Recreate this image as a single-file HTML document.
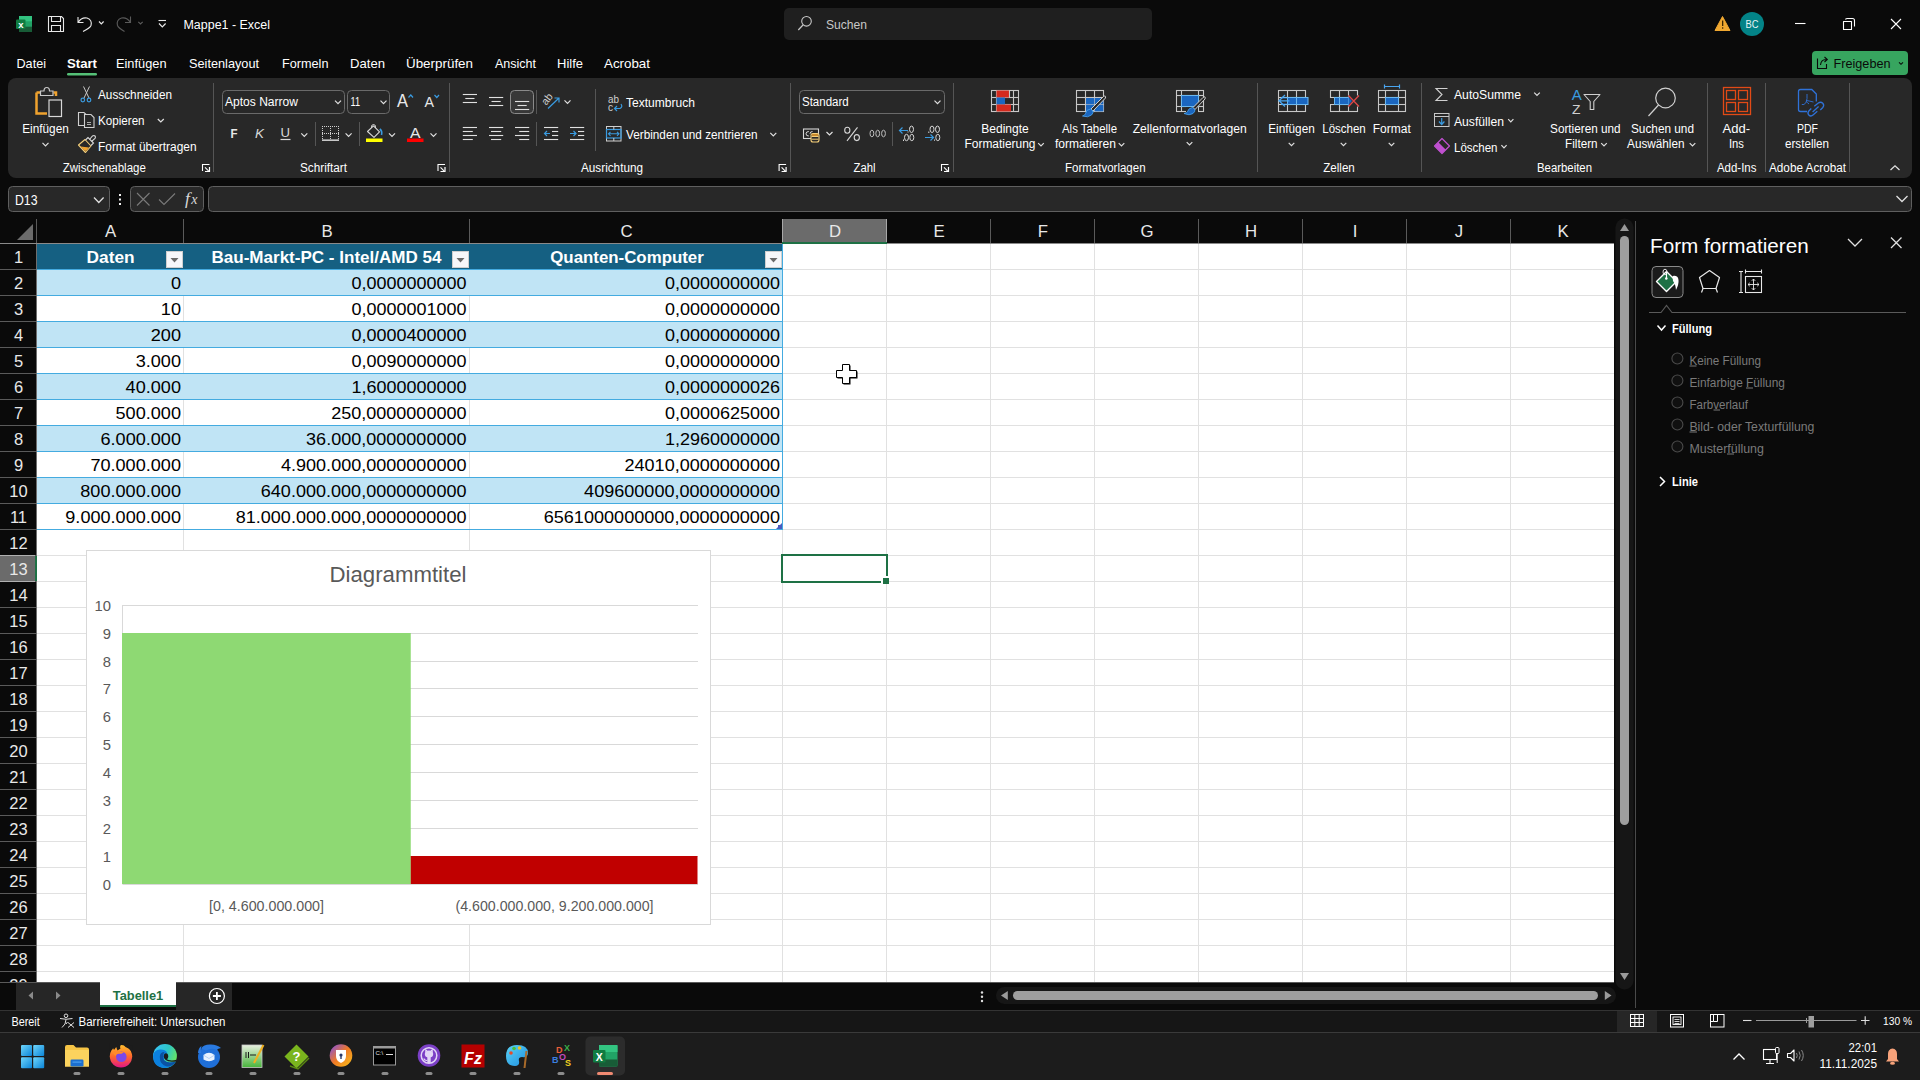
<!DOCTYPE html><html><head><meta charset="utf-8"><title>Mappe1 - Excel</title><style>html,body{margin:0;padding:0;background:#0a0a0a;overflow:hidden;width:1920px;height:1080px}svg{display:block;font-family:"Liberation Sans",sans-serif}</style></head><body>
<svg width="1920" height="1080" viewBox="0 0 1920 1080">
<rect x="0" y="0" width="1920" height="1080" fill="#0a0a0a"/>
<rect x="19" y="16" width="13" height="16" rx="1" fill="#21a366"/>
<rect x="19" y="16" width="13" height="5.3" fill="#33c481"/>
<rect x="19" y="26.7" width="13" height="5.3" fill="#185c37"/>
<rect x="16" y="19.5" width="9.5" height="9.5" rx="1" fill="#107c41"/>
<text x="20.8" y="27.5" font-size="9.5" fill="#ffffff" text-anchor="middle" font-weight="bold">x</text>
<path d="M48.5 16.5 L61.5 16.5 L63.5 18.5 L63.5 31.5 L48.5 31.5 Z" stroke="#e8e8e8" fill="none" stroke-width="1.1"/>
<path d="M51.5 16.5 L51.5 21.5 L60.5 21.5 L60.5 16.5 M51.5 31.5 L51.5 25.5 L60.5 25.5 L60.5 31.5" stroke="#e8e8e8" fill="none" stroke-width="1.1"/>
<path d="M78 17 L78 22.5 L83.5 22.5 M78 22.5 Q81.5 17 87 18 Q92.5 20 91 25.5 Q90 28 83 31.5" stroke="#e8e8e8" fill="none" stroke-width="1.1"/>
<path d="M99 21.5 L101.3 23.8 L103.6 21.5" stroke="#e8e8e8" fill="none" stroke-width="1.2"/>
<path d="M130.5 16.5 L130.5 22.5 L125 22.5 M130.5 22.5 Q127 17 121.5 18 Q116 20 117.5 25.5 Q118.5 28 124.5 31.5" stroke="#5a5a5a" fill="none" stroke-width="1.1"/>
<path d="M138.3 21.8 L140.5 24 L142.7 21.8" stroke="#5a5a5a" fill="none" stroke-width="1.2"/>
<line x1="158.5" y1="20.5" x2="166" y2="20.5" stroke="#e8e8e8" stroke-width="1.1"/>
<path d="M159 23.5 L162.3 26.8 L165.6 23.5" stroke="#e8e8e8" fill="none" stroke-width="1.2"/>
<text x="183.5" y="29.2" font-size="12.5" fill="#ffffff" textLength="86.5" lengthAdjust="spacingAndGlyphs">Mappe1  -  Excel</text>
<rect x="784" y="8" width="368" height="32" rx="5" fill="#1f1f1f"/>
<circle cx="806.5" cy="21.3" r="4.8" fill="none" stroke="#c8c8c8" stroke-width="1.1"/>
<line x1="803" y1="25" x2="798.3" y2="30" stroke="#c8c8c8" stroke-width="1.2"/>
<text x="826" y="29" font-size="13" fill="#c8c8c8" textLength="41" lengthAdjust="spacingAndGlyphs">Suchen</text>
<path d="M1722.5 16.5 L1730 30.5 L1715 30.5 Z" stroke="#f0a830" fill="#f0a830" stroke-width="1" stroke-linejoin="round"/>
<rect x="1722" y="20.5" width="1.3" height="5.5" fill="#3a2500"/>
<rect x="1722" y="27.3" width="1.3" height="1.4" fill="#3a2500"/>
<circle cx="1752" cy="24" r="12" fill="#038387"/>
<text x="1752" y="28.3" font-size="11.5" fill="#e8f4f4" text-anchor="middle" textLength="13" lengthAdjust="spacingAndGlyphs">BC</text>
<line x1="1795" y1="23.5" x2="1805.5" y2="23.5" stroke="#ffffff" stroke-width="1.1"/>
<path d="M1843.5 21.5 L1851.5 21.5 L1851.5 29.5 L1843.5 29.5 Z" stroke="#ffffff" fill="none" stroke-width="1.1" stroke-linejoin="round"/>
<path d="M1845.5 19.5 Q1845.5 18.5 1847 18.5 L1852.5 18.5 Q1854.5 18.5 1854.5 20.5 L1854.5 26.5" stroke="#ffffff" fill="none" stroke-width="1.1"/>
<path d="M1891 19 L1901 29 M1901 19 L1891 29" stroke="#ffffff" fill="none" stroke-width="1.1"/>
<text x="16.5" y="68" font-size="13" fill="#ffffff" textLength="29.5" lengthAdjust="spacingAndGlyphs">Datei</text>
<text x="67" y="68" font-size="13" fill="#ffffff" font-weight="bold" textLength="30" lengthAdjust="spacingAndGlyphs">Start</text>
<text x="116" y="68" font-size="13" fill="#ffffff" textLength="50.5" lengthAdjust="spacingAndGlyphs">Einfügen</text>
<text x="189" y="68" font-size="13" fill="#ffffff" textLength="70" lengthAdjust="spacingAndGlyphs">Seitenlayout</text>
<text x="282" y="68" font-size="13" fill="#ffffff" textLength="46.5" lengthAdjust="spacingAndGlyphs">Formeln</text>
<text x="350" y="68" font-size="13" fill="#ffffff" textLength="35" lengthAdjust="spacingAndGlyphs">Daten</text>
<text x="406" y="68" font-size="13" fill="#ffffff" textLength="67" lengthAdjust="spacingAndGlyphs">Überprüfen</text>
<text x="495" y="68" font-size="13" fill="#ffffff" textLength="41" lengthAdjust="spacingAndGlyphs">Ansicht</text>
<text x="557" y="68" font-size="13" fill="#ffffff" textLength="26" lengthAdjust="spacingAndGlyphs">Hilfe</text>
<text x="604" y="68" font-size="13" fill="#ffffff" textLength="46" lengthAdjust="spacingAndGlyphs">Acrobat</text>
<rect x="67" y="73" width="30" height="2.5" rx="1.2" fill="#55c077"/>
<rect x="1812" y="51" width="96" height="24" rx="4" fill="#37a55f"/>
<path d="M1817.5 58.5 L1817.5 68.5 L1826.5 68.5 L1826.5 64" stroke="#0a0a0a" fill="none" stroke-width="1.1"/>
<path d="M1820.5 65 Q1821 59.5 1826 59.5 L1827 59.5 M1824.5 57 L1827.3 59.5 L1824.5 62" stroke="#0a0a0a" fill="none" stroke-width="1.1"/>
<text x="1833.5" y="68" font-size="13.3" fill="#0a0a0a" textLength="57" lengthAdjust="spacingAndGlyphs">Freigeben</text>
<path d="M1899 62.3 L1901 64.3 L1903 62.3" stroke="#0a0a0a" fill="none" stroke-width="1.1"/>
<rect x="8" y="78" width="1904" height="100" rx="8" fill="#282828"/>
<path d="M36.5 92.5 L36.5 113.5 L47 113.5" stroke="#f0a22e" fill="none" stroke-width="2.5"/>
<path d="M36.5 92.5 L40 92.5 M53.5 92.5 L56 92.5 L56 96" stroke="#f0a22e" fill="none" stroke-width="2.5"/>
<path d="M40.5 95.5 L40.5 91 L44 91 Q44 87.5 46.8 87.5 Q49.5 87.5 49.5 91 L53 91 L53 95.5 Z" stroke="#c8c8c8" fill="#282828" stroke-width="1.2"/>
<rect x="49" y="100" width="12.5" height="16.5" fill="#282828" stroke="#d8d8d8" stroke-width="1.2"/>
<text x="45.5" y="132.7" font-size="12" fill="#ffffff" text-anchor="middle" textLength="46.5" lengthAdjust="spacingAndGlyphs">Einfügen</text>
<path d="M42.5 142.8 L45.5 145.8 L48.5 142.8" stroke="#e0e0e0" fill="none" stroke-width="1.2"/>
<path d="M83.5 86.5 L89 98 M89.5 86.5 L84 98" stroke="#c8c8c8" fill="none" stroke-width="1"/>
<circle cx="82.8" cy="100" r="1.8" fill="none" stroke="#3a9be0" stroke-width="1.2"/><circle cx="89" cy="100" r="1.8" fill="none" stroke="#3a9be0" stroke-width="1.2"/>
<text x="98" y="99.2" font-size="12" fill="#ffffff" textLength="74" lengthAdjust="spacingAndGlyphs">Ausschneiden</text>
<path d="M84 125.5 L78.5 125.5 L78.5 112.5 L84 112.5 L86 114.5" stroke="#d0d0d0" fill="none" stroke-width="1.1"/>
<path d="M86.5 114.5 L91 114.5 L94 117.5 L94 127.5 L84.5 127.5 L84.5 114.5 Z" stroke="#d0d0d0" fill="#282828" stroke-width="1.1"/>
<path d="M87 122.5 L91 122.5 M87 124.5 L91 124.5" stroke="#d0d0d0" fill="none" stroke-width="0.8"/>
<text x="98" y="125.3" font-size="12" fill="#ffffff" textLength="46.6" lengthAdjust="spacingAndGlyphs">Kopieren</text>
<path d="M157.8 119.0 L160.8 122.0 L163.8 119.0" stroke="#e0e0e0" fill="none" stroke-width="1.2"/>
<path d="M78.5 145 L85 139.5 L91 146 L85.5 152.5 Z" stroke="#f5cf7a" fill="#282828" stroke-width="1.1" stroke-linejoin="round"/>
<path d="M80.5 146.5 L84.5 150.5 L86 151 L89 147.5 Z" stroke="none" fill="#f0a22e" stroke-width="1"/>
<path d="M85.5 140 L88 137.5 L93.5 143 L91 145.5" stroke="#d8d8d8" fill="none" stroke-width="1.1"/>
<path d="M89.5 139.5 L92.5 136 Q94 135 95 136 Q96 137 95 138.5 L91.5 141.5" stroke="#d8d8d8" fill="none" stroke-width="1.1"/>
<text x="98" y="151" font-size="12" fill="#ffffff" textLength="98.5" lengthAdjust="spacingAndGlyphs">Format übertragen</text>
<text x="104.3" y="171.7" font-size="12" fill="#ffffff" text-anchor="middle" textLength="83" lengthAdjust="spacingAndGlyphs">Zwischenablage</text>
<path d="M202.5 171 L202.5 164.5 L209.5 164.5" stroke="#ffffff" fill="none" stroke-width="1.1"/>
<path d="M205 167.3 L209 171.3" stroke="#ffffff" fill="none" stroke-width="1.1"/>
<path d="M205 171.5 L209.5 171.5 L209.5 167" stroke="#ffffff" fill="none" stroke-width="1.2"/>
<line x1="213.5" y1="83" x2="213.5" y2="172" stroke="#555555" stroke-width="1"/>
<rect x="222.5" y="90.5" width="122" height="23" rx="4" fill="#282828" stroke="#6a6a6a"/>
<text x="225" y="106" font-size="12.3" fill="#ffffff" textLength="73" lengthAdjust="spacingAndGlyphs">Aptos Narrow</text>
<path d="M335 100.7 L338 103.7 L341 100.7" stroke="#e0e0e0" fill="none" stroke-width="1.2"/>
<rect x="347.5" y="90.5" width="42" height="23" rx="4" fill="#282828" stroke="#6a6a6a"/>
<text x="350.6" y="106" font-size="12.3" fill="#ffffff" textLength="9.5" lengthAdjust="spacingAndGlyphs">11</text>
<path d="M380.5 100.7 L383.5 103.7 L386.5 100.7" stroke="#e0e0e0" fill="none" stroke-width="1.2"/>
<text x="397" y="106.6" font-size="17.5" fill="#e8e8e8" textLength="11" lengthAdjust="spacingAndGlyphs">A</text>
<path d="M408.5 97.5 L410.8 95 L413 97.5" stroke="#3a9be0" fill="none" stroke-width="1.2"/>
<text x="424.5" y="106.5" font-size="15" fill="#e8e8e8" textLength="9.5" lengthAdjust="spacingAndGlyphs">A</text>
<path d="M434.5 95 L436.8 97.5 L439 95" stroke="#3a9be0" fill="none" stroke-width="1.2"/>
<text x="230.6" y="138.2" font-size="13.5" fill="#e8e8e8" font-weight="bold" textLength="7" lengthAdjust="spacingAndGlyphs">F</text>
<text x="255" y="138.2" font-size="13.5" fill="#d8d8d8" textLength="9" lengthAdjust="spacingAndGlyphs" font-style="italic">K</text>
<text x="280.6" y="137" font-size="13.5" fill="#d8d8d8" textLength="9.5" lengthAdjust="spacingAndGlyphs">U</text>
<line x1="280.5" y1="139.5" x2="290.5" y2="139.5" stroke="#d8d8d8" stroke-width="1.2"/>
<path d="M301.3 133.3 L304.3 136.3 L307.3 133.3" stroke="#e0e0e0" fill="none" stroke-width="1.2"/>
<line x1="315.5" y1="122" x2="315.5" y2="146" stroke="#555555" stroke-width="1"/>
<rect x="322" y="126" width="1" height="1" fill="#d0d0d0"/>
<rect x="324" y="126" width="1" height="1" fill="#d0d0d0"/>
<rect x="326" y="126" width="1" height="1" fill="#d0d0d0"/>
<rect x="328" y="126" width="1" height="1" fill="#d0d0d0"/>
<rect x="330" y="126" width="1" height="1" fill="#d0d0d0"/>
<rect x="332" y="126" width="1" height="1" fill="#d0d0d0"/>
<rect x="334" y="126" width="1" height="1" fill="#d0d0d0"/>
<rect x="336" y="126" width="1" height="1" fill="#d0d0d0"/>
<rect x="338" y="126" width="1" height="1" fill="#d0d0d0"/>
<rect x="322" y="126" width="1" height="1" fill="#d0d0d0"/>
<rect x="338" y="126" width="1" height="1" fill="#d0d0d0"/>
<rect x="330" y="126" width="1" height="1" fill="#d0d0d0"/>
<rect x="322" y="128" width="1" height="1" fill="#d0d0d0"/>
<rect x="338" y="128" width="1" height="1" fill="#d0d0d0"/>
<rect x="330" y="128" width="1" height="1" fill="#d0d0d0"/>
<rect x="322" y="130" width="1" height="1" fill="#d0d0d0"/>
<rect x="338" y="130" width="1" height="1" fill="#d0d0d0"/>
<rect x="330" y="130" width="1" height="1" fill="#d0d0d0"/>
<rect x="322" y="132" width="1" height="1" fill="#d0d0d0"/>
<rect x="338" y="132" width="1" height="1" fill="#d0d0d0"/>
<rect x="330" y="132" width="1" height="1" fill="#d0d0d0"/>
<rect x="322" y="134" width="1" height="1" fill="#d0d0d0"/>
<rect x="338" y="134" width="1" height="1" fill="#d0d0d0"/>
<rect x="330" y="134" width="1" height="1" fill="#d0d0d0"/>
<rect x="322" y="136" width="1" height="1" fill="#d0d0d0"/>
<rect x="338" y="136" width="1" height="1" fill="#d0d0d0"/>
<rect x="330" y="136" width="1" height="1" fill="#d0d0d0"/>
<rect x="322" y="138" width="1" height="1" fill="#d0d0d0"/>
<rect x="338" y="138" width="1" height="1" fill="#d0d0d0"/>
<rect x="330" y="138" width="1" height="1" fill="#d0d0d0"/>
<rect x="322" y="133" width="1" height="1" fill="#d0d0d0"/>
<rect x="324" y="133" width="1" height="1" fill="#d0d0d0"/>
<rect x="326" y="133" width="1" height="1" fill="#d0d0d0"/>
<rect x="328" y="133" width="1" height="1" fill="#d0d0d0"/>
<rect x="330" y="133" width="1" height="1" fill="#d0d0d0"/>
<rect x="332" y="133" width="1" height="1" fill="#d0d0d0"/>
<rect x="334" y="133" width="1" height="1" fill="#d0d0d0"/>
<rect x="336" y="133" width="1" height="1" fill="#d0d0d0"/>
<rect x="338" y="133" width="1" height="1" fill="#d0d0d0"/>
<rect x="322" y="139.5" width="17" height="1.3" fill="#f0f0f0"/>
<path d="M345.6 133.3 L348.6 136.3 L351.6 133.3" stroke="#e0e0e0" fill="none" stroke-width="1.2"/>
<line x1="359.5" y1="122" x2="359.5" y2="146" stroke="#555555" stroke-width="1"/>
<path d="M367.5 131.5 L373.5 125.8 L379.5 131.8 L374 137.3 Z" stroke="#d8d8d8" fill="none" stroke-width="1.1" stroke-linejoin="round"/>
<path d="M371.5 128 Q371 124.5 373.5 124.5 Q376 124.5 375.5 128" stroke="#d8d8d8" fill="none" stroke-width="1"/>
<path d="M379.8 129 Q382.5 131 381.5 135" stroke="#3a9be0" fill="none" stroke-width="1.6"/>
<rect x="366" y="138.5" width="16.5" height="3.5" fill="#ffff00"/>
<path d="M389 133.3 L392 136.3 L395 133.3" stroke="#e0e0e0" fill="none" stroke-width="1.2"/>
<text x="415.3" y="137.5" font-size="14" fill="#e8e8e8" text-anchor="middle" textLength="10.5" lengthAdjust="spacingAndGlyphs">A</text>
<rect x="407" y="138.5" width="16.5" height="3.5" fill="#ff0000"/>
<path d="M430.5 133.3 L433.5 136.3 L436.5 133.3" stroke="#e0e0e0" fill="none" stroke-width="1.2"/>
<text x="323.5" y="171.6" font-size="12" fill="#ffffff" text-anchor="middle" textLength="47" lengthAdjust="spacingAndGlyphs">Schriftart</text>
<path d="M438.0 171 L438.0 164.5 L445.0 164.5" stroke="#ffffff" fill="none" stroke-width="1.1"/>
<path d="M440.5 167.3 L444.5 171.3" stroke="#ffffff" fill="none" stroke-width="1.1"/>
<path d="M440.5 171.5 L445.0 171.5 L445.0 167" stroke="#ffffff" fill="none" stroke-width="1.2"/>
<line x1="449.5" y1="83" x2="449.5" y2="172" stroke="#555555" stroke-width="1"/>
<line x1="462.8" y1="94.5" x2="477.0" y2="94.5" stroke="#e0e0e0" stroke-width="1.1"/>
<line x1="465.3" y1="98.5" x2="474.5" y2="98.5" stroke="#e0e0e0" stroke-width="1.1"/>
<line x1="462.8" y1="102.5" x2="477.0" y2="102.5" stroke="#e0e0e0" stroke-width="1.1"/>
<line x1="489" y1="97.5" x2="503.2" y2="97.5" stroke="#e0e0e0" stroke-width="1.1"/>
<line x1="491.5" y1="101.5" x2="500.7" y2="101.5" stroke="#e0e0e0" stroke-width="1.1"/>
<line x1="489" y1="105.5" x2="503.2" y2="105.5" stroke="#e0e0e0" stroke-width="1.1"/>
<rect x="510.5" y="90.5" width="23" height="23" rx="4" fill="#383838" stroke="#8a8a8a"/>
<line x1="515" y1="101.5" x2="529.2" y2="101.5" stroke="#e0e0e0" stroke-width="1.1"/>
<line x1="517.5" y1="105.5" x2="526.7" y2="105.5" stroke="#e0e0e0" stroke-width="1.1"/>
<line x1="515" y1="109.5" x2="529.2" y2="109.5" stroke="#e0e0e0" stroke-width="1.1"/>
<line x1="536.5" y1="90" x2="536.5" y2="114" stroke="#555555" stroke-width="1"/>
<text x="547" y="102.5" font-size="10.5" fill="#d0d0d0" text-anchor="middle" transform="rotate(-52 547 99)">ab</text>
<path d="M548 108.5 L559 98 M554.5 98 L559 98 L559 102.5" stroke="#3a9be0" fill="none" stroke-width="1.2"/>
<path d="M564.5 100.3 L567.5 103.3 L570.5 100.3" stroke="#e0e0e0" fill="none" stroke-width="1.2"/>
<line x1="462.8" y1="127.5" x2="477.0" y2="127.5" stroke="#e0e0e0" stroke-width="1.1"/>
<line x1="462.8" y1="131.5" x2="472.8" y2="131.5" stroke="#e0e0e0" stroke-width="1.1"/>
<line x1="462.8" y1="135.5" x2="477.0" y2="135.5" stroke="#e0e0e0" stroke-width="1.1"/>
<line x1="462.8" y1="139.5" x2="472.8" y2="139.5" stroke="#e0e0e0" stroke-width="1.1"/>
<line x1="489" y1="127.5" x2="503.2" y2="127.5" stroke="#e0e0e0" stroke-width="1.1"/>
<line x1="491" y1="131.5" x2="501.2" y2="131.5" stroke="#e0e0e0" stroke-width="1.1"/>
<line x1="489" y1="135.5" x2="503.2" y2="135.5" stroke="#e0e0e0" stroke-width="1.1"/>
<line x1="491" y1="139.5" x2="501.2" y2="139.5" stroke="#e0e0e0" stroke-width="1.1"/>
<line x1="515" y1="127.5" x2="529.2" y2="127.5" stroke="#e0e0e0" stroke-width="1.1"/>
<line x1="519.2" y1="131.5" x2="529.2" y2="131.5" stroke="#e0e0e0" stroke-width="1.1"/>
<line x1="515" y1="135.5" x2="529.2" y2="135.5" stroke="#e0e0e0" stroke-width="1.1"/>
<line x1="519.2" y1="139.5" x2="529.2" y2="139.5" stroke="#e0e0e0" stroke-width="1.1"/>
<line x1="536.5" y1="122" x2="536.5" y2="146" stroke="#555555" stroke-width="1"/>
<line x1="544" y1="127.5" x2="558.2" y2="127.5" stroke="#e0e0e0" stroke-width="1.1"/>
<line x1="552" y1="131.5" x2="558.2" y2="131.5" stroke="#e0e0e0" stroke-width="1.1"/>
<line x1="552" y1="135.5" x2="558.2" y2="135.5" stroke="#e0e0e0" stroke-width="1.1"/>
<line x1="544" y1="139.5" x2="558.2" y2="139.5" stroke="#e0e0e0" stroke-width="1.1"/>
<path d="M550 133.5 L544.5 133.5 M547 131 L544.5 133.5 L547 136" stroke="#3a9be0" fill="none" stroke-width="1.2"/>
<line x1="570" y1="127.5" x2="584.2" y2="127.5" stroke="#e0e0e0" stroke-width="1.1"/>
<line x1="578" y1="131.5" x2="584.2" y2="131.5" stroke="#e0e0e0" stroke-width="1.1"/>
<line x1="578" y1="135.5" x2="584.2" y2="135.5" stroke="#e0e0e0" stroke-width="1.1"/>
<line x1="570" y1="139.5" x2="584.2" y2="139.5" stroke="#e0e0e0" stroke-width="1.1"/>
<path d="M570 133.5 L576 133.5 M573.5 131 L576 133.5 L573.5 136" stroke="#3a9be0" fill="none" stroke-width="1.2"/>
<line x1="595.5" y1="89" x2="595.5" y2="151" stroke="#555555" stroke-width="1"/>
<text x="608" y="103" font-size="10" fill="#d0d0d0" textLength="11" lengthAdjust="spacingAndGlyphs">ab</text>
<text x="608" y="110.5" font-size="10" fill="#d0d0d0">c</text>
<path d="M621 104 Q623 107 620 108.5 L614.5 108.5 M617 106 L614.5 108.5 L617 111" stroke="#3a9be0" fill="none" stroke-width="1.2"/>
<text x="626" y="106.7" font-size="12" fill="#ffffff" textLength="69" lengthAdjust="spacingAndGlyphs">Textumbruch</text>
<rect x="606.5" y="126.5" width="14.5" height="14.5" fill="none" stroke="#d0d0d0" stroke-width="1"/>
<rect x="606.5" y="129.5" width="14.5" height="8.5" fill="none" stroke="#3a9be0" stroke-width="1.2"/>
<line x1="613.8" y1="126.5" x2="613.8" y2="129.5" stroke="#d0d0d0" stroke-width="1"/>
<line x1="613.8" y1="138" x2="613.8" y2="141" stroke="#d0d0d0" stroke-width="1"/>
<path d="M608.5 133.8 L619 133.8 M610.5 131.8 L608.5 133.8 L610.5 135.8 M617 131.8 L619 133.8 L617 135.8" stroke="#3a9be0" fill="none" stroke-width="1.1"/>
<text x="626" y="139" font-size="12" fill="#ffffff" textLength="131.5" lengthAdjust="spacingAndGlyphs">Verbinden und zentrieren</text>
<path d="M770.3 132.9 L773.3 135.9 L776.3 132.9" stroke="#e0e0e0" fill="none" stroke-width="1.2"/>
<text x="612" y="171.7" font-size="12" fill="#ffffff" text-anchor="middle" textLength="62" lengthAdjust="spacingAndGlyphs">Ausrichtung</text>
<path d="M779.1 171 L779.1 164.5 L786.1 164.5" stroke="#ffffff" fill="none" stroke-width="1.1"/>
<path d="M781.6 167.3 L785.6 171.3" stroke="#ffffff" fill="none" stroke-width="1.1"/>
<path d="M781.6 171.5 L786.1 171.5 L786.1 167" stroke="#ffffff" fill="none" stroke-width="1.2"/>
<line x1="790.5" y1="83" x2="790.5" y2="172" stroke="#555555" stroke-width="1"/>
<rect x="799.5" y="90.5" width="145" height="23" rx="4" fill="#282828" stroke="#6a6a6a"/>
<text x="802" y="106" font-size="12.3" fill="#ffffff" textLength="46.7" lengthAdjust="spacingAndGlyphs">Standard</text>
<path d="M934.5 100.7 L937.5 103.7 L940.5 100.7" stroke="#e0e0e0" fill="none" stroke-width="1.2"/>
<rect x="803.5" y="129" width="15" height="9.5" fill="none" stroke="#d8d8d8" stroke-width="1.1"/>
<path d="M808.8 131.5 Q806 131.5 806 133.8 Q806 136 808.8 136" stroke="#d8d8d8" fill="none" stroke-width="1"/>
<path d="M812.5 131.5 Q810 131.5 810 133.8" stroke="#d8d8d8" fill="none" stroke-width="1"/>
<rect x="811" y="133.5" width="8" height="8.5" rx="2" fill="#282828" stroke="#f5cf7a" stroke-width="1.1"/>
<line x1="811.5" y1="136.5" x2="818.5" y2="136.5" stroke="#f5cf7a" stroke-width="1"/>
<line x1="811.5" y1="139.2" x2="818.5" y2="139.2" stroke="#f5cf7a" stroke-width="1"/>
<rect x="812" y="134.2" width="6" height="1.6" fill="#f0a22e"/>
<path d="M826.5 132.0 L829.5 135.0 L832.5 132.0" stroke="#e0e0e0" fill="none" stroke-width="1.2"/>
<ellipse cx="847.3" cy="130.2" rx="2.6" ry="3" fill="none" stroke="#d8d8d8" stroke-width="1.1"/>
<ellipse cx="856.8" cy="137.6" rx="2.6" ry="3" fill="none" stroke="#d8d8d8" stroke-width="1.1"/>
<line x1="857.5" y1="127.3" x2="847" y2="140.8" stroke="#d8d8d8" stroke-width="1.1"/>
<ellipse cx="871.9" cy="133.5" rx="1.9" ry="3.3" fill="none" stroke="#bdbdbd" stroke-width="1"/>
<ellipse cx="877.7" cy="133.5" rx="1.9" ry="3.3" fill="none" stroke="#bdbdbd" stroke-width="1"/>
<ellipse cx="883.5" cy="133.5" rx="1.9" ry="3.3" fill="none" stroke="#bdbdbd" stroke-width="1"/>
<line x1="892.5" y1="122" x2="892.5" y2="146" stroke="#555555" stroke-width="1"/>
<path d="M908 130.5 L899.5 130.5 M902.5 127.5 L899.5 130.5 L902.5 133.5" stroke="#3a9be0" fill="none" stroke-width="1.2"/>
<ellipse cx="911.5" cy="129.3" rx="2" ry="3.2" fill="none" stroke="#d8d8d8" stroke-width="1"/>
<rect x="907.5" y="131.5" width="1" height="1" fill="#d8d8d8"/>
<rect x="903" y="139.5" width="1" height="1.5" fill="#d8d8d8"/>
<ellipse cx="906.5" cy="137.5" rx="2" ry="3.2" fill="none" stroke="#d8d8d8" stroke-width="1"/>
<ellipse cx="911.8" cy="137.5" rx="2" ry="3.2" fill="none" stroke="#d8d8d8" stroke-width="1"/>
<rect x="928.3" y="131.5" width="1" height="1.5" fill="#d8d8d8"/>
<ellipse cx="932" cy="129.3" rx="2" ry="3.2" fill="none" stroke="#d8d8d8" stroke-width="1"/>
<ellipse cx="937.5" cy="129.3" rx="2" ry="3.2" fill="none" stroke="#d8d8d8" stroke-width="1"/>
<path d="M925 137.5 L933.5 137.5 M930.5 134.5 L933.5 137.5 L930.5 140.5" stroke="#3a9be0" fill="none" stroke-width="1.2"/>
<rect x="934" y="139.5" width="1" height="1.2" fill="#d8d8d8"/>
<ellipse cx="937.8" cy="137.5" rx="2" ry="3.2" fill="none" stroke="#d8d8d8" stroke-width="1"/>
<text x="864.5" y="171.7" font-size="12" fill="#ffffff" text-anchor="middle" textLength="22" lengthAdjust="spacingAndGlyphs">Zahl</text>
<path d="M941.5 171 L941.5 164.5 L948.5 164.5" stroke="#ffffff" fill="none" stroke-width="1.1"/>
<path d="M944 167.3 L948 171.3" stroke="#ffffff" fill="none" stroke-width="1.1"/>
<path d="M944 171.5 L948.5 171.5 L948.5 167" stroke="#ffffff" fill="none" stroke-width="1.2"/>
<line x1="953.5" y1="83" x2="953.5" y2="172" stroke="#555555" stroke-width="1"/>
<rect x="991.5" y="90.5" width="27.0" height="21.0" fill="none" stroke="#c8c8c8" stroke-width="1.1"/>
<line x1="996.5" y1="90.5" x2="996.5" y2="111.5" stroke="#c8c8c8" stroke-width="1.1"/>
<line x1="1013.5" y1="90.5" x2="1013.5" y2="111.5" stroke="#c8c8c8" stroke-width="1.1"/>
<line x1="991.5" y1="97.5" x2="1018.5" y2="97.5" stroke="#c8c8c8" stroke-width="1.1"/>
<line x1="991.5" y1="104.5" x2="1018.5" y2="104.5" stroke="#c8c8c8" stroke-width="1.1"/>
<rect x="996.5" y="90.5" width="12.5" height="7" fill="#d42a1e"/>
<rect x="996.5" y="97.5" width="8.5" height="7" fill="#1a66c0"/>
<rect x="996.5" y="104.5" width="14.5" height="7" fill="#d42a1e"/>
<line x1="1009.5" y1="90.5" x2="1009.5" y2="97.5" stroke="#c8c8c8" stroke-width="1.1"/>
<text x="1005" y="132.8" font-size="12" fill="#ffffff" text-anchor="middle" textLength="47.5" lengthAdjust="spacingAndGlyphs">Bedingte</text>
<text x="1000" y="148.4" font-size="12" fill="#ffffff" text-anchor="middle" textLength="71" lengthAdjust="spacingAndGlyphs">Formatierung</text>
<path d="M1038.2 143.1 L1041 145.9 L1043.8 143.1" stroke="#e0e0e0" fill="none" stroke-width="1.2"/>
<rect x="1085.5" y="97.5" width="18.5" height="14" fill="#1a66c0"/>
<rect x="1076.5" y="90.5" width="27.0" height="21.0" fill="none" stroke="#c8c8c8" stroke-width="1.1"/>
<line x1="1085.5" y1="90.5" x2="1085.5" y2="111.5" stroke="#c8c8c8" stroke-width="1.1"/>
<line x1="1094.5" y1="90.5" x2="1094.5" y2="111.5" stroke="#c8c8c8" stroke-width="1.1"/>
<line x1="1076.5" y1="97.5" x2="1103.5" y2="97.5" stroke="#c8c8c8" stroke-width="1.1"/>
<line x1="1076.5" y1="104.5" x2="1103.5" y2="104.5" stroke="#c8c8c8" stroke-width="1.1"/>
<rect x="1086.1" y="98.1" width="8.3" height="6.3" fill="#1a66c0"/>
<rect x="1095.1" y="98.1" width="8.3" height="6.3" fill="#1a66c0"/>
<rect x="1086.1" y="105.1" width="8.3" height="6.3" fill="#1a66c0"/>
<rect x="1095.1" y="105.1" width="8.3" height="6.3" fill="#1a66c0"/>
<path d="M1091 109 L1103.5 96.5 Q1106 95 1105.5 98 L1093 111 Z" stroke="#d0d0d0" fill="#282828" stroke-width="1"/>
<path d="M1090.5 109 Q1086 109.5 1085.5 113.5 Q1085 115.5 1082.5 116 Q1088 118 1091.5 115 Q1094 112.5 1092.5 110.5 Z" stroke="#4aa6f0" fill="#1a66c0" stroke-width="0.8"/>
<text x="1089.5" y="132.8" font-size="12" fill="#ffffff" text-anchor="middle" textLength="55" lengthAdjust="spacingAndGlyphs">Als Tabelle</text>
<text x="1085.5" y="148.4" font-size="12" fill="#ffffff" text-anchor="middle" textLength="61" lengthAdjust="spacingAndGlyphs">formatieren</text>
<path d="M1118.7 143.1 L1121.5 145.9 L1124.3 143.1" stroke="#e0e0e0" fill="none" stroke-width="1.2"/>
<rect x="1176.5" y="90.5" width="27.0" height="21.0" fill="none" stroke="#c8c8c8" stroke-width="1.1"/>
<line x1="1181.5" y1="90.5" x2="1181.5" y2="111.5" stroke="#c8c8c8" stroke-width="1.1"/>
<line x1="1198.5" y1="90.5" x2="1198.5" y2="111.5" stroke="#c8c8c8" stroke-width="1.1"/>
<line x1="1176.5" y1="95.5" x2="1203.5" y2="95.5" stroke="#c8c8c8" stroke-width="1.1"/>
<line x1="1176.5" y1="106.5" x2="1203.5" y2="106.5" stroke="#c8c8c8" stroke-width="1.1"/>
<rect x="1182" y="96" width="16" height="10" fill="#1a66c0"/>
<rect x="1181.5" y="95.5" width="17" height="11" fill="none" stroke="#6ab8f0" stroke-width="1"/>
<rect x="1186" y="107" width="12" height="6" fill="#282828"/>
<path d="M1193 107.5 L1203 97.5 Q1206 95.5 1205 99 L1195 109.5 Z" stroke="#d0d0d0" fill="#282828" stroke-width="1"/>
<path d="M1192.5 107.5 Q1188.5 108 1187.5 111.5 Q1187 113 1184 113.5 Q1189.5 116 1193 113.5 Q1196 111 1194.5 109 Z" stroke="#4aa6f0" fill="#1a66c0" stroke-width="0.8"/>
<text x="1189.7" y="132.8" font-size="12" fill="#ffffff" text-anchor="middle" textLength="114" lengthAdjust="spacingAndGlyphs">Zellenformatvorlagen</text>
<path d="M1186.7 142.1 L1189.5 144.9 L1192.3 142.1" stroke="#e0e0e0" fill="none" stroke-width="1.2"/>
<text x="1105.3" y="171.7" font-size="12" fill="#ffffff" text-anchor="middle" textLength="80.5" lengthAdjust="spacingAndGlyphs">Formatvorlagen</text>
<line x1="1257.5" y1="83" x2="1257.5" y2="172" stroke="#555555" stroke-width="1"/>
<rect x="1278.5" y="90.5" width="27.0" height="21.0" fill="none" stroke="#c8c8c8" stroke-width="1.1"/>
<line x1="1287.5" y1="90.5" x2="1287.5" y2="111.5" stroke="#c8c8c8" stroke-width="1.1"/>
<line x1="1296.5" y1="90.5" x2="1296.5" y2="111.5" stroke="#c8c8c8" stroke-width="1.1"/>
<line x1="1278.5" y1="97.5" x2="1305.5" y2="97.5" stroke="#c8c8c8" stroke-width="1.1"/>
<line x1="1278.5" y1="104.5" x2="1305.5" y2="104.5" stroke="#c8c8c8" stroke-width="1.1"/>
<rect x="1281.5" y="97.5" width="26.5" height="7" fill="#1a66c0"/>
<rect x="1281.5" y="97.5" width="26.5" height="7" fill="none" stroke="#6ab8f0" stroke-width="1"/>
<line x1="1287.5" y1="97.5" x2="1287.5" y2="104.5" stroke="#6ab8f0" stroke-width="1"/>
<line x1="1296.5" y1="97.5" x2="1296.5" y2="104.5" stroke="#6ab8f0" stroke-width="1"/>
<rect x="1281" y="98.5" width="6" height="5" fill="#282828"/>
<path d="M1289.5 100.8 L1279.5 100.8 M1285 95 L1279 100.8 L1285 106.5" stroke="#4aa6f0" fill="none" stroke-width="1.3"/>
<text x="1291.5" y="132.8" font-size="12" fill="#ffffff" text-anchor="middle" textLength="46.5" lengthAdjust="spacingAndGlyphs">Einfügen</text>
<path d="M1288.7 142.9 L1291.5 145.70000000000002 L1294.3 142.9" stroke="#e0e0e0" fill="none" stroke-width="1.2"/>
<rect x="1330.5" y="90.5" width="27.0" height="21.0" fill="none" stroke="#c8c8c8" stroke-width="1.1"/>
<line x1="1339.5" y1="90.5" x2="1339.5" y2="111.5" stroke="#c8c8c8" stroke-width="1.1"/>
<line x1="1348.5" y1="90.5" x2="1348.5" y2="111.5" stroke="#c8c8c8" stroke-width="1.1"/>
<line x1="1330.5" y1="97.5" x2="1357.5" y2="97.5" stroke="#c8c8c8" stroke-width="1.1"/>
<line x1="1330.5" y1="104.5" x2="1357.5" y2="104.5" stroke="#c8c8c8" stroke-width="1.1"/>
<rect x="1329" y="98" width="5" height="6" fill="#282828"/>
<rect x="1348.5" y="95.5" width="11" height="11" fill="#282828"/>
<rect x="1334.5" y="97.5" width="14" height="7" fill="#1a66c0"/>
<rect x="1334.5" y="97.5" width="14" height="7" fill="none" stroke="#6ab8f0" stroke-width="1"/>
<line x1="1339.5" y1="97.5" x2="1339.5" y2="104.5" stroke="#6ab8f0" stroke-width="1"/>
<path d="M1348.5 97 L1352 101 L1348.5 105" stroke="none" fill="#1a66c0" stroke-width="1"/>
<path d="M1348.5 95.5 L1359 106.5 M1359 95.5 L1348.5 106.5" stroke="#e04848" fill="none" stroke-width="1.3"/>
<text x="1344" y="132.8" font-size="12" fill="#ffffff" text-anchor="middle" textLength="43.5" lengthAdjust="spacingAndGlyphs">Löschen</text>
<path d="M1340.7 142.9 L1343.5 145.70000000000002 L1346.3 142.9" stroke="#e0e0e0" fill="none" stroke-width="1.2"/>
<rect x="1378.5" y="90.5" width="27.0" height="21.0" fill="none" stroke="#c8c8c8" stroke-width="1.1"/>
<line x1="1385.5" y1="90.5" x2="1385.5" y2="111.5" stroke="#c8c8c8" stroke-width="1.1"/>
<line x1="1398.5" y1="90.5" x2="1398.5" y2="111.5" stroke="#c8c8c8" stroke-width="1.1"/>
<line x1="1378.5" y1="97.5" x2="1405.5" y2="97.5" stroke="#c8c8c8" stroke-width="1.1"/>
<line x1="1378.5" y1="104.5" x2="1405.5" y2="104.5" stroke="#c8c8c8" stroke-width="1.1"/>
<rect x="1385.5" y="97.5" width="13" height="7" fill="#1a66c0"/>
<rect x="1385.5" y="97.5" width="13" height="7" fill="none" stroke="#6ab8f0" stroke-width="1"/>
<path d="M1384.5 86.5 L1399.5 86.5 M1384.5 84.5 L1384.5 88.5 M1399.5 84.5 L1399.5 88.5" stroke="#4aa6f0" fill="none" stroke-width="1.2"/>
<text x="1391.8" y="132.8" font-size="12" fill="#ffffff" text-anchor="middle" textLength="38" lengthAdjust="spacingAndGlyphs">Format</text>
<path d="M1388.7 142.9 L1391.5 145.70000000000002 L1394.3 142.9" stroke="#e0e0e0" fill="none" stroke-width="1.2"/>
<text x="1339" y="171.7" font-size="12" fill="#ffffff" text-anchor="middle" textLength="31.5" lengthAdjust="spacingAndGlyphs">Zellen</text>
<line x1="1421.5" y1="83" x2="1421.5" y2="172" stroke="#555555" stroke-width="1"/>
<path d="M1447.5 88.5 L1436 88.5 L1442 94.5 L1436 100.5 L1447.5 100.5" stroke="#d0d0d0" fill="none" stroke-width="1.1"/>
<text x="1454" y="99.4" font-size="12" fill="#ffffff" textLength="67" lengthAdjust="spacingAndGlyphs">AutoSumme</text>
<path d="M1534.2 92.6 L1537 95.4 L1539.8 92.6" stroke="#e0e0e0" fill="none" stroke-width="1.2"/>
<rect x="1434.5" y="113.5" width="14.5" height="13" fill="none" stroke="#c8c8c8" stroke-width="1"/>
<line x1="1434.5" y1="116.5" x2="1449" y2="116.5" stroke="#c8c8c8" stroke-width="1"/>
<path d="M1441.7 118 L1441.7 124 M1439 121.5 L1441.7 124.5 L1444.4 121.5" stroke="#3a9be0" fill="none" stroke-width="1.2"/>
<text x="1454" y="125.5" font-size="12" fill="#ffffff" textLength="50" lengthAdjust="spacingAndGlyphs">Ausfüllen</text>
<path d="M1508.2 119.2 L1510.8 121.8 L1513.3999999999999 119.2" stroke="#e0e0e0" fill="none" stroke-width="1.2"/>
<path d="M1434.5 146 L1442 138.5 L1449.5 146 L1442 153.5 Z" stroke="#c050d0" fill="#282828" stroke-width="1.2" stroke-linejoin="round"/>
<path d="M1434.5 146 L1438.3 142.2 L1445.8 149.7 L1442 153.5 Z" stroke="none" fill="#c050d0" stroke-width="1"/>
<text x="1454" y="151.5" font-size="12" fill="#ffffff" textLength="43.5" lengthAdjust="spacingAndGlyphs">Löschen</text>
<path d="M1501.4 145.2 L1504 147.8 L1506.6 145.2" stroke="#e0e0e0" fill="none" stroke-width="1.2"/>
<text x="1571.8" y="99.7" font-size="14.5" fill="#3a9be0" textLength="10" lengthAdjust="spacingAndGlyphs">A</text>
<text x="1572" y="114" font-size="13" fill="#d0d0d0" textLength="8.5" lengthAdjust="spacingAndGlyphs">Z</text>
<path d="M1584 94.5 L1600 94.5 L1593.8 101.5 L1593.8 109.5 L1590.2 109.5 L1590.2 101.5 Z" stroke="#d0d0d0" fill="none" stroke-width="1.1" stroke-linejoin="round"/>
<text x="1585.3" y="132.8" font-size="12" fill="#ffffff" text-anchor="middle" textLength="70.5" lengthAdjust="spacingAndGlyphs">Sortieren und</text>
<text x="1581.3" y="148.4" font-size="12" fill="#ffffff" text-anchor="middle" textLength="32.5" lengthAdjust="spacingAndGlyphs">Filtern</text>
<path d="M1601.2 143.1 L1604 145.9 L1606.8 143.1" stroke="#e0e0e0" fill="none" stroke-width="1.2"/>
<circle cx="1665.5" cy="98" r="9.8" fill="none" stroke="#d0d0d0" stroke-width="1.2"/>
<line x1="1658.5" y1="105" x2="1648.5" y2="116" stroke="#d0d0d0" stroke-width="1.2"/>
<text x="1662.5" y="132.8" font-size="12" fill="#ffffff" text-anchor="middle" textLength="63" lengthAdjust="spacingAndGlyphs">Suchen und</text>
<text x="1655.8" y="148.4" font-size="12" fill="#ffffff" text-anchor="middle" textLength="57.5" lengthAdjust="spacingAndGlyphs">Auswählen</text>
<path d="M1689.7 143.1 L1692.5 145.9 L1695.3 143.1" stroke="#e0e0e0" fill="none" stroke-width="1.2"/>
<text x="1564.5" y="171.7" font-size="12" fill="#ffffff" text-anchor="middle" textLength="55" lengthAdjust="spacingAndGlyphs">Bearbeiten</text>
<line x1="1707.5" y1="83" x2="1707.5" y2="172" stroke="#555555" stroke-width="1"/>
<rect x="1723.5" y="87.5" width="27" height="27" fill="none" stroke="#e24a16" stroke-width="1.3"/>
<rect x="1726.5" y="90.5" width="9" height="9" fill="none" stroke="#e24a16" stroke-width="1.3"/>
<rect x="1738.5" y="90.5" width="9" height="9" fill="none" stroke="#e24a16" stroke-width="1.3"/>
<rect x="1726.5" y="102.5" width="9" height="9" fill="none" stroke="#e24a16" stroke-width="1.3"/>
<rect x="1738.5" y="102.5" width="9" height="9" fill="none" stroke="#e24a16" stroke-width="1.3"/>
<text x="1736.3" y="132.8" font-size="12" fill="#ffffff" text-anchor="middle" textLength="27.5" lengthAdjust="spacingAndGlyphs">Add-</text>
<text x="1736.5" y="148.4" font-size="12" fill="#ffffff" text-anchor="middle" textLength="15" lengthAdjust="spacingAndGlyphs">Ins</text>
<text x="1736.7" y="171.7" font-size="12" fill="#ffffff" text-anchor="middle" textLength="39.5" lengthAdjust="spacingAndGlyphs">Add-Ins</text>
<line x1="1765.5" y1="83" x2="1765.5" y2="172" stroke="#555555" stroke-width="1"/>
<path d="M1807 111.5 L1800.5 111.5 Q1798.5 111.5 1798.5 109.5 L1798.5 91.5 Q1798.5 89.5 1800.5 89.5 L1811.8 89.5 L1816.3 94 L1816.3 101.5" stroke="#2f72d8" fill="none" stroke-width="1.3"/>
<path d="M1807 94 Q1807.5 99 1806 102.5 Q1804 105.5 1801.8 104.5 M1806.5 100.5 Q1809.5 101 1813.5 102 M1806 101.5 Q1808 103 1809 104" stroke="#2f72d8" fill="none" stroke-width="0.9"/>
<path d="M1812.5 103.8 L1816.5 100.5 Q1819 98.8 1821 100.8 Q1822.8 102.8 1821 105 L1818.5 107.5" stroke="#2f72d8" fill="none" stroke-width="1.3" transform="translate(1.8,2.5)"/>
<path d="M1815.5 108.8 L1811.5 112.3 Q1809 114.5 1807 112.5 Q1805.3 110.5 1807 108.5 L1809.5 106" stroke="#2f72d8" fill="none" stroke-width="1.3" transform="translate(1.8,2.5)"/>
<path d="M1810.8 109.5 L1816.8 104" stroke="#2f72d8" fill="none" stroke-width="1.3" transform="translate(1.8,2.5)"/>
<text x="1807.5" y="132.8" font-size="12" fill="#ffffff" text-anchor="middle" textLength="21" lengthAdjust="spacingAndGlyphs">PDF</text>
<text x="1807" y="148.4" font-size="12" fill="#ffffff" text-anchor="middle" textLength="44" lengthAdjust="spacingAndGlyphs">erstellen</text>
<text x="1807.5" y="171.7" font-size="12" fill="#ffffff" text-anchor="middle" textLength="77" lengthAdjust="spacingAndGlyphs">Adobe Acrobat</text>
<line x1="1849.5" y1="83" x2="1849.5" y2="172" stroke="#555555" stroke-width="1"/>
<path d="M1890.5 170 L1895 165.8 L1899.5 170" stroke="#e0e0e0" fill="none" stroke-width="1.3"/>
<rect x="8.5" y="186.5" width="101" height="25" rx="4" fill="#282828" stroke="#5f5f5f"/>
<rect x="130.5" y="186.5" width="73" height="25" rx="4" fill="#282828" stroke="#5f5f5f"/>
<rect x="208.5" y="186.5" width="1703" height="25" rx="4" fill="#282828" stroke="#5f5f5f"/>
<text x="15" y="204.5" font-size="15" fill="#ffffff" textLength="22.5" lengthAdjust="spacingAndGlyphs">D13</text>
<path d="M94 197.5 L98.8 202.5 L103.6 197.5" stroke="#e0e0e0" fill="none" stroke-width="1.3"/>
<rect x="119" y="194" width="2" height="2" fill="#f0f0f0"/>
<rect x="119" y="198.5" width="2" height="2" fill="#f0f0f0"/>
<rect x="119" y="203" width="2" height="2" fill="#f0f0f0"/>
<path d="M137 193 L149.5 205.5 M149.5 193 L137 205.5" stroke="#7a7a7a" fill="none" stroke-width="1.1"/>
<path d="M159 199.5 L164 204.5 L175 193.5" stroke="#7a7a7a" fill="none" stroke-width="1.1"/>
<text x="185" y="204" font-size="17.5" fill="#d8d8d8" font-family="Liberation Serif" font-style="italic">f</text>
<text x="191.3" y="203.5" font-size="14" fill="#d8d8d8" font-family="Liberation Serif" font-style="italic">x</text>
<path d="M1896.5 196 L1902 201.5 L1907.5 196" stroke="#e0e0e0" fill="none" stroke-width="1.3"/>
<rect x="37" y="244" width="1577" height="739" fill="#ffffff"/>
<line x1="37" y1="269.5" x2="1614" y2="269.5" stroke="#e1e1e1" stroke-width="1"/>
<line x1="37" y1="295.5" x2="1614" y2="295.5" stroke="#e1e1e1" stroke-width="1"/>
<line x1="37" y1="321.5" x2="1614" y2="321.5" stroke="#e1e1e1" stroke-width="1"/>
<line x1="37" y1="347.5" x2="1614" y2="347.5" stroke="#e1e1e1" stroke-width="1"/>
<line x1="37" y1="373.5" x2="1614" y2="373.5" stroke="#e1e1e1" stroke-width="1"/>
<line x1="37" y1="399.5" x2="1614" y2="399.5" stroke="#e1e1e1" stroke-width="1"/>
<line x1="37" y1="425.5" x2="1614" y2="425.5" stroke="#e1e1e1" stroke-width="1"/>
<line x1="37" y1="451.5" x2="1614" y2="451.5" stroke="#e1e1e1" stroke-width="1"/>
<line x1="37" y1="477.5" x2="1614" y2="477.5" stroke="#e1e1e1" stroke-width="1"/>
<line x1="37" y1="503.5" x2="1614" y2="503.5" stroke="#e1e1e1" stroke-width="1"/>
<line x1="37" y1="529.5" x2="1614" y2="529.5" stroke="#e1e1e1" stroke-width="1"/>
<line x1="37" y1="555.5" x2="1614" y2="555.5" stroke="#e1e1e1" stroke-width="1"/>
<line x1="37" y1="581.5" x2="1614" y2="581.5" stroke="#e1e1e1" stroke-width="1"/>
<line x1="37" y1="607.5" x2="1614" y2="607.5" stroke="#e1e1e1" stroke-width="1"/>
<line x1="37" y1="633.5" x2="1614" y2="633.5" stroke="#e1e1e1" stroke-width="1"/>
<line x1="37" y1="659.5" x2="1614" y2="659.5" stroke="#e1e1e1" stroke-width="1"/>
<line x1="37" y1="685.5" x2="1614" y2="685.5" stroke="#e1e1e1" stroke-width="1"/>
<line x1="37" y1="711.5" x2="1614" y2="711.5" stroke="#e1e1e1" stroke-width="1"/>
<line x1="37" y1="737.5" x2="1614" y2="737.5" stroke="#e1e1e1" stroke-width="1"/>
<line x1="37" y1="763.5" x2="1614" y2="763.5" stroke="#e1e1e1" stroke-width="1"/>
<line x1="37" y1="789.5" x2="1614" y2="789.5" stroke="#e1e1e1" stroke-width="1"/>
<line x1="37" y1="815.5" x2="1614" y2="815.5" stroke="#e1e1e1" stroke-width="1"/>
<line x1="37" y1="841.5" x2="1614" y2="841.5" stroke="#e1e1e1" stroke-width="1"/>
<line x1="37" y1="867.5" x2="1614" y2="867.5" stroke="#e1e1e1" stroke-width="1"/>
<line x1="37" y1="893.5" x2="1614" y2="893.5" stroke="#e1e1e1" stroke-width="1"/>
<line x1="37" y1="919.5" x2="1614" y2="919.5" stroke="#e1e1e1" stroke-width="1"/>
<line x1="37" y1="945.5" x2="1614" y2="945.5" stroke="#e1e1e1" stroke-width="1"/>
<line x1="37" y1="971.5" x2="1614" y2="971.5" stroke="#e1e1e1" stroke-width="1"/>
<line x1="183.5" y1="244" x2="183.5" y2="983" stroke="#e1e1e1" stroke-width="1"/>
<line x1="469.5" y1="244" x2="469.5" y2="983" stroke="#e1e1e1" stroke-width="1"/>
<line x1="782.5" y1="244" x2="782.5" y2="983" stroke="#e1e1e1" stroke-width="1"/>
<line x1="886.5" y1="244" x2="886.5" y2="983" stroke="#e1e1e1" stroke-width="1"/>
<line x1="990.5" y1="244" x2="990.5" y2="983" stroke="#e1e1e1" stroke-width="1"/>
<line x1="1094.5" y1="244" x2="1094.5" y2="983" stroke="#e1e1e1" stroke-width="1"/>
<line x1="1198.5" y1="244" x2="1198.5" y2="983" stroke="#e1e1e1" stroke-width="1"/>
<line x1="1302.5" y1="244" x2="1302.5" y2="983" stroke="#e1e1e1" stroke-width="1"/>
<line x1="1406.5" y1="244" x2="1406.5" y2="983" stroke="#e1e1e1" stroke-width="1"/>
<line x1="1510.5" y1="244" x2="1510.5" y2="983" stroke="#e1e1e1" stroke-width="1"/>
<rect x="0" y="219" width="1614" height="25" fill="#0a0a0a"/>
<path d="M17 240 L33 224 L33 240 Z" stroke="none" fill="#6b6b6b" stroke-width="1"/>
<line x1="36.5" y1="219" x2="36.5" y2="243" stroke="#5a5a5a" stroke-width="1"/>
<rect x="783" y="219" width="103" height="24" fill="#6b6b6b"/>
<line x1="183.5" y1="219" x2="183.5" y2="243" stroke="#5a5a5a" stroke-width="1"/>
<text x="110.5" y="237.2" font-size="16.8" fill="#e8e8e8" text-anchor="middle">A</text>
<line x1="469.5" y1="219" x2="469.5" y2="243" stroke="#5a5a5a" stroke-width="1"/>
<text x="327.0" y="237.2" font-size="16.8" fill="#e8e8e8" text-anchor="middle">B</text>
<line x1="782.5" y1="219" x2="782.5" y2="243" stroke="#5a5a5a" stroke-width="1"/>
<text x="626.5" y="237.2" font-size="16.8" fill="#e8e8e8" text-anchor="middle">C</text>
<line x1="886.5" y1="219" x2="886.5" y2="243" stroke="#5a5a5a" stroke-width="1"/>
<text x="835.0" y="237.2" font-size="16.8" fill="#e8e8e8" text-anchor="middle">D</text>
<line x1="990.5" y1="219" x2="990.5" y2="243" stroke="#5a5a5a" stroke-width="1"/>
<text x="939.0" y="237.2" font-size="16.8" fill="#e8e8e8" text-anchor="middle">E</text>
<line x1="1094.5" y1="219" x2="1094.5" y2="243" stroke="#5a5a5a" stroke-width="1"/>
<text x="1043.0" y="237.2" font-size="16.8" fill="#e8e8e8" text-anchor="middle">F</text>
<line x1="1198.5" y1="219" x2="1198.5" y2="243" stroke="#5a5a5a" stroke-width="1"/>
<text x="1147.0" y="237.2" font-size="16.8" fill="#e8e8e8" text-anchor="middle">G</text>
<line x1="1302.5" y1="219" x2="1302.5" y2="243" stroke="#5a5a5a" stroke-width="1"/>
<text x="1251.0" y="237.2" font-size="16.8" fill="#e8e8e8" text-anchor="middle">H</text>
<line x1="1406.5" y1="219" x2="1406.5" y2="243" stroke="#5a5a5a" stroke-width="1"/>
<text x="1355.0" y="237.2" font-size="16.8" fill="#e8e8e8" text-anchor="middle">I</text>
<line x1="1510.5" y1="219" x2="1510.5" y2="243" stroke="#5a5a5a" stroke-width="1"/>
<text x="1459.0" y="237.2" font-size="16.8" fill="#e8e8e8" text-anchor="middle">J</text>
<text x="1563.0" y="237.2" font-size="16.8" fill="#e8e8e8" text-anchor="middle">K</text>
<line x1="0" y1="243.5" x2="1614" y2="243.5" stroke="#8a8a8a" stroke-width="1"/>
<line x1="782.5" y1="219" x2="782.5" y2="242" stroke="#a8a8a8" stroke-width="1"/>
<line x1="886.5" y1="219" x2="886.5" y2="242" stroke="#a8a8a8" stroke-width="1"/>
<rect x="782" y="242" width="105" height="2" fill="#1e7145"/>
<rect x="0" y="244" width="36" height="739" fill="#0a0a0a"/>
<line x1="36.5" y1="244" x2="36.5" y2="983" stroke="#6e6e6e" stroke-width="1"/>
<rect x="0" y="556" width="36" height="25" fill="#6b6b6b"/>
<rect x="35" y="556" width="2" height="25" fill="#1e7145"/>
<line x1="0" y1="269.5" x2="36" y2="269.5" stroke="#5a5a5a" stroke-width="1"/>
<text x="18.5" y="263" font-size="16.5" fill="#e8e8e8" text-anchor="middle">1</text>
<line x1="0" y1="295.5" x2="36" y2="295.5" stroke="#5a5a5a" stroke-width="1"/>
<text x="18.5" y="289" font-size="16.5" fill="#e8e8e8" text-anchor="middle">2</text>
<line x1="0" y1="321.5" x2="36" y2="321.5" stroke="#5a5a5a" stroke-width="1"/>
<text x="18.5" y="315" font-size="16.5" fill="#e8e8e8" text-anchor="middle">3</text>
<line x1="0" y1="347.5" x2="36" y2="347.5" stroke="#5a5a5a" stroke-width="1"/>
<text x="18.5" y="341" font-size="16.5" fill="#e8e8e8" text-anchor="middle">4</text>
<line x1="0" y1="373.5" x2="36" y2="373.5" stroke="#5a5a5a" stroke-width="1"/>
<text x="18.5" y="367" font-size="16.5" fill="#e8e8e8" text-anchor="middle">5</text>
<line x1="0" y1="399.5" x2="36" y2="399.5" stroke="#5a5a5a" stroke-width="1"/>
<text x="18.5" y="393" font-size="16.5" fill="#e8e8e8" text-anchor="middle">6</text>
<line x1="0" y1="425.5" x2="36" y2="425.5" stroke="#5a5a5a" stroke-width="1"/>
<text x="18.5" y="419" font-size="16.5" fill="#e8e8e8" text-anchor="middle">7</text>
<line x1="0" y1="451.5" x2="36" y2="451.5" stroke="#5a5a5a" stroke-width="1"/>
<text x="18.5" y="445" font-size="16.5" fill="#e8e8e8" text-anchor="middle">8</text>
<line x1="0" y1="477.5" x2="36" y2="477.5" stroke="#5a5a5a" stroke-width="1"/>
<text x="18.5" y="471" font-size="16.5" fill="#e8e8e8" text-anchor="middle">9</text>
<line x1="0" y1="503.5" x2="36" y2="503.5" stroke="#5a5a5a" stroke-width="1"/>
<text x="18.5" y="497" font-size="16.5" fill="#e8e8e8" text-anchor="middle">10</text>
<line x1="0" y1="529.5" x2="36" y2="529.5" stroke="#5a5a5a" stroke-width="1"/>
<text x="18.5" y="523" font-size="16.5" fill="#e8e8e8" text-anchor="middle">11</text>
<line x1="0" y1="555.5" x2="36" y2="555.5" stroke="#5a5a5a" stroke-width="1"/>
<text x="18.5" y="549" font-size="16.5" fill="#e8e8e8" text-anchor="middle">12</text>
<line x1="0" y1="581.5" x2="36" y2="581.5" stroke="#5a5a5a" stroke-width="1"/>
<text x="18.5" y="575" font-size="16.5" fill="#e8e8e8" text-anchor="middle">13</text>
<line x1="0" y1="607.5" x2="36" y2="607.5" stroke="#5a5a5a" stroke-width="1"/>
<text x="18.5" y="601" font-size="16.5" fill="#e8e8e8" text-anchor="middle">14</text>
<line x1="0" y1="633.5" x2="36" y2="633.5" stroke="#5a5a5a" stroke-width="1"/>
<text x="18.5" y="627" font-size="16.5" fill="#e8e8e8" text-anchor="middle">15</text>
<line x1="0" y1="659.5" x2="36" y2="659.5" stroke="#5a5a5a" stroke-width="1"/>
<text x="18.5" y="653" font-size="16.5" fill="#e8e8e8" text-anchor="middle">16</text>
<line x1="0" y1="685.5" x2="36" y2="685.5" stroke="#5a5a5a" stroke-width="1"/>
<text x="18.5" y="679" font-size="16.5" fill="#e8e8e8" text-anchor="middle">17</text>
<line x1="0" y1="711.5" x2="36" y2="711.5" stroke="#5a5a5a" stroke-width="1"/>
<text x="18.5" y="705" font-size="16.5" fill="#e8e8e8" text-anchor="middle">18</text>
<line x1="0" y1="737.5" x2="36" y2="737.5" stroke="#5a5a5a" stroke-width="1"/>
<text x="18.5" y="731" font-size="16.5" fill="#e8e8e8" text-anchor="middle">19</text>
<line x1="0" y1="763.5" x2="36" y2="763.5" stroke="#5a5a5a" stroke-width="1"/>
<text x="18.5" y="757" font-size="16.5" fill="#e8e8e8" text-anchor="middle">20</text>
<line x1="0" y1="789.5" x2="36" y2="789.5" stroke="#5a5a5a" stroke-width="1"/>
<text x="18.5" y="783" font-size="16.5" fill="#e8e8e8" text-anchor="middle">21</text>
<line x1="0" y1="815.5" x2="36" y2="815.5" stroke="#5a5a5a" stroke-width="1"/>
<text x="18.5" y="809" font-size="16.5" fill="#e8e8e8" text-anchor="middle">22</text>
<line x1="0" y1="841.5" x2="36" y2="841.5" stroke="#5a5a5a" stroke-width="1"/>
<text x="18.5" y="835" font-size="16.5" fill="#e8e8e8" text-anchor="middle">23</text>
<line x1="0" y1="867.5" x2="36" y2="867.5" stroke="#5a5a5a" stroke-width="1"/>
<text x="18.5" y="861" font-size="16.5" fill="#e8e8e8" text-anchor="middle">24</text>
<line x1="0" y1="893.5" x2="36" y2="893.5" stroke="#5a5a5a" stroke-width="1"/>
<text x="18.5" y="887" font-size="16.5" fill="#e8e8e8" text-anchor="middle">25</text>
<line x1="0" y1="919.5" x2="36" y2="919.5" stroke="#5a5a5a" stroke-width="1"/>
<text x="18.5" y="913" font-size="16.5" fill="#e8e8e8" text-anchor="middle">26</text>
<line x1="0" y1="945.5" x2="36" y2="945.5" stroke="#5a5a5a" stroke-width="1"/>
<text x="18.5" y="939" font-size="16.5" fill="#e8e8e8" text-anchor="middle">27</text>
<line x1="0" y1="971.5" x2="36" y2="971.5" stroke="#5a5a5a" stroke-width="1"/>
<text x="18.5" y="965" font-size="16.5" fill="#e8e8e8" text-anchor="middle">28</text>
<line x1="0" y1="997.5" x2="36" y2="997.5" stroke="#5a5a5a" stroke-width="1"/>
<text x="18.5" y="991" font-size="16.5" fill="#e8e8e8" text-anchor="middle">29</text>
<line x1="0" y1="555.5" x2="35" y2="555.5" stroke="#b0b0b0" stroke-width="1"/>
<line x1="0" y1="581.5" x2="35" y2="581.5" stroke="#b0b0b0" stroke-width="1"/>
<rect x="37" y="244" width="746" height="25" fill="#156082"/>
<rect x="37" y="270" width="746" height="25" fill="#c0e4f5"/>
<rect x="37" y="322" width="746" height="25" fill="#c0e4f5"/>
<rect x="37" y="374" width="746" height="25" fill="#c0e4f5"/>
<rect x="37" y="426" width="746" height="25" fill="#c0e4f5"/>
<rect x="37" y="478" width="746" height="25" fill="#c0e4f5"/>
<line x1="37" y1="269.5" x2="783" y2="269.5" stroke="#44abe0" stroke-width="1"/>
<line x1="37" y1="295.5" x2="783" y2="295.5" stroke="#44abe0" stroke-width="1"/>
<line x1="37" y1="321.5" x2="783" y2="321.5" stroke="#44abe0" stroke-width="1"/>
<line x1="37" y1="347.5" x2="783" y2="347.5" stroke="#44abe0" stroke-width="1"/>
<line x1="37" y1="373.5" x2="783" y2="373.5" stroke="#44abe0" stroke-width="1"/>
<line x1="37" y1="399.5" x2="783" y2="399.5" stroke="#44abe0" stroke-width="1"/>
<line x1="37" y1="425.5" x2="783" y2="425.5" stroke="#44abe0" stroke-width="1"/>
<line x1="37" y1="451.5" x2="783" y2="451.5" stroke="#44abe0" stroke-width="1"/>
<line x1="37" y1="477.5" x2="783" y2="477.5" stroke="#44abe0" stroke-width="1"/>
<line x1="37" y1="503.5" x2="783" y2="503.5" stroke="#44abe0" stroke-width="1"/>
<line x1="37" y1="529.5" x2="783" y2="529.5" stroke="#44abe0" stroke-width="1"/>
<line x1="782.5" y1="244" x2="782.5" y2="529" stroke="#44abe0" stroke-width="1"/>
<text x="110.6" y="263.3" font-size="17" fill="#ffffff" text-anchor="middle" font-weight="bold" textLength="48" lengthAdjust="spacingAndGlyphs">Daten</text>
<text x="326.5" y="263.3" font-size="17" fill="#ffffff" text-anchor="middle" font-weight="bold" textLength="230" lengthAdjust="spacingAndGlyphs">Bau-Markt-PC - Intel/AMD 54</text>
<text x="627" y="263.3" font-size="17" fill="#ffffff" text-anchor="middle" font-weight="bold" textLength="153.5" lengthAdjust="spacingAndGlyphs">Quanten-Computer</text>
<rect x="166.5" y="251.5" width="16" height="16" fill="#f6f7fa" stroke="#cfcfcf" stroke-width="1"/>
<path d="M170.5 258 L178.5 258 L174.5 262.5 Z" fill="#6a6a6a"/>
<rect x="452.5" y="251.5" width="16" height="16" fill="#f6f7fa" stroke="#cfcfcf" stroke-width="1"/>
<path d="M456.5 258 L464.5 258 L460.5 262.5 Z" fill="#6a6a6a"/>
<rect x="765.5" y="251.5" width="16" height="16" fill="#f6f7fa" stroke="#cfcfcf" stroke-width="1"/>
<path d="M769.5 258 L777.5 258 L773.5 262.5 Z" fill="#6a6a6a"/>
<text x="181" y="289" font-size="16.6" fill="#000000" text-anchor="end" textLength="10.1" lengthAdjust="spacingAndGlyphs">0</text>
<text x="466.5" y="289" font-size="16.6" fill="#000000" text-anchor="end" textLength="115.1" lengthAdjust="spacingAndGlyphs">0,0000000000</text>
<text x="780" y="289" font-size="16.6" fill="#000000" text-anchor="end" textLength="115.1" lengthAdjust="spacingAndGlyphs">0,0000000000</text>
<text x="181" y="315" font-size="16.6" fill="#000000" text-anchor="end" textLength="20.2" lengthAdjust="spacingAndGlyphs">10</text>
<text x="466.5" y="315" font-size="16.6" fill="#000000" text-anchor="end" textLength="115.1" lengthAdjust="spacingAndGlyphs">0,0000001000</text>
<text x="780" y="315" font-size="16.6" fill="#000000" text-anchor="end" textLength="115.1" lengthAdjust="spacingAndGlyphs">0,0000000000</text>
<text x="181" y="341" font-size="16.6" fill="#000000" text-anchor="end" textLength="30.3" lengthAdjust="spacingAndGlyphs">200</text>
<text x="466.5" y="341" font-size="16.6" fill="#000000" text-anchor="end" textLength="115.1" lengthAdjust="spacingAndGlyphs">0,0000400000</text>
<text x="780" y="341" font-size="16.6" fill="#000000" text-anchor="end" textLength="115.1" lengthAdjust="spacingAndGlyphs">0,0000000000</text>
<text x="181" y="367" font-size="16.6" fill="#000000" text-anchor="end" textLength="45.3" lengthAdjust="spacingAndGlyphs">3.000</text>
<text x="466.5" y="367" font-size="16.6" fill="#000000" text-anchor="end" textLength="115.1" lengthAdjust="spacingAndGlyphs">0,0090000000</text>
<text x="780" y="367" font-size="16.6" fill="#000000" text-anchor="end" textLength="115.1" lengthAdjust="spacingAndGlyphs">0,0000000000</text>
<text x="181" y="393" font-size="16.6" fill="#000000" text-anchor="end" textLength="55.4" lengthAdjust="spacingAndGlyphs">40.000</text>
<text x="466.5" y="393" font-size="16.6" fill="#000000" text-anchor="end" textLength="115.1" lengthAdjust="spacingAndGlyphs">1,6000000000</text>
<text x="780" y="393" font-size="16.6" fill="#000000" text-anchor="end" textLength="115.1" lengthAdjust="spacingAndGlyphs">0,0000000026</text>
<text x="181" y="419" font-size="16.6" fill="#000000" text-anchor="end" textLength="65.5" lengthAdjust="spacingAndGlyphs">500.000</text>
<text x="466.5" y="419" font-size="16.6" fill="#000000" text-anchor="end" textLength="135.3" lengthAdjust="spacingAndGlyphs">250,0000000000</text>
<text x="780" y="419" font-size="16.6" fill="#000000" text-anchor="end" textLength="115.1" lengthAdjust="spacingAndGlyphs">0,0000625000</text>
<text x="181" y="445" font-size="16.6" fill="#000000" text-anchor="end" textLength="80.5" lengthAdjust="spacingAndGlyphs">6.000.000</text>
<text x="466.5" y="445" font-size="16.6" fill="#000000" text-anchor="end" textLength="160.4" lengthAdjust="spacingAndGlyphs">36.000,0000000000</text>
<text x="780" y="445" font-size="16.6" fill="#000000" text-anchor="end" textLength="115.1" lengthAdjust="spacingAndGlyphs">1,2960000000</text>
<text x="181" y="471" font-size="16.6" fill="#000000" text-anchor="end" textLength="90.6" lengthAdjust="spacingAndGlyphs">70.000.000</text>
<text x="466.5" y="471" font-size="16.6" fill="#000000" text-anchor="end" textLength="185.5" lengthAdjust="spacingAndGlyphs">4.900.000,0000000000</text>
<text x="780" y="471" font-size="16.6" fill="#000000" text-anchor="end" textLength="155.5" lengthAdjust="spacingAndGlyphs">24010,0000000000</text>
<text x="181" y="497" font-size="16.6" fill="#000000" text-anchor="end" textLength="100.7" lengthAdjust="spacingAndGlyphs">800.000.000</text>
<text x="466.5" y="497" font-size="16.6" fill="#000000" text-anchor="end" textLength="205.7" lengthAdjust="spacingAndGlyphs">640.000.000,0000000000</text>
<text x="780" y="497" font-size="16.6" fill="#000000" text-anchor="end" textLength="195.9" lengthAdjust="spacingAndGlyphs">409600000,0000000000</text>
<text x="181" y="523" font-size="16.6" fill="#000000" text-anchor="end" textLength="115.7" lengthAdjust="spacingAndGlyphs">9.000.000.000</text>
<text x="466.5" y="523" font-size="16.6" fill="#000000" text-anchor="end" textLength="230.8" lengthAdjust="spacingAndGlyphs">81.000.000.000,0000000000</text>
<text x="780" y="523" font-size="16.6" fill="#000000" text-anchor="end" textLength="236.3" lengthAdjust="spacingAndGlyphs">6561000000000,0000000000</text>
<path d="M776 529 L782 529 L782 523 Z" stroke="none" fill="#4b5bbf" stroke-width="1"/>
<rect x="778" y="525" width="4" height="4" fill="#4b5bbf"/>
<rect x="782" y="555" width="105" height="27" fill="none" stroke="#1e7145" stroke-width="2"/>
<rect x="883" y="578" width="6" height="6" fill="#1e7145"/>
<rect x="881" y="576" width="2" height="8" fill="#ffffff"/>
<rect x="881" y="576" width="8" height="2" fill="#ffffff"/>
<rect x="884" y="579" width="5" height="5" fill="#1e7145"/>
<rect x="86.5" y="550.5" width="624.0" height="374.0" fill="#ffffff" stroke="#d9d9d9" stroke-width="1"/>
<text x="398" y="582" font-size="22.3" fill="#595959" text-anchor="middle" textLength="137" lengthAdjust="spacingAndGlyphs">Diagrammtitel</text>
<line x1="122.5" y1="884.5" x2="698" y2="884.5" stroke="#d9d9d9" stroke-width="1"/>
<text x="111" y="889.5" font-size="14.8" fill="#595959" text-anchor="end">0</text>
<line x1="122.5" y1="856.5" x2="698" y2="856.5" stroke="#d9d9d9" stroke-width="1"/>
<text x="111" y="861.5" font-size="14.8" fill="#595959" text-anchor="end">1</text>
<line x1="122.5" y1="828.5" x2="698" y2="828.5" stroke="#d9d9d9" stroke-width="1"/>
<text x="111" y="833.5" font-size="14.8" fill="#595959" text-anchor="end">2</text>
<line x1="122.5" y1="800.5" x2="698" y2="800.5" stroke="#d9d9d9" stroke-width="1"/>
<text x="111" y="805.5" font-size="14.8" fill="#595959" text-anchor="end">3</text>
<line x1="122.5" y1="772.5" x2="698" y2="772.5" stroke="#d9d9d9" stroke-width="1"/>
<text x="111" y="777.5" font-size="14.8" fill="#595959" text-anchor="end">4</text>
<line x1="122.5" y1="744.5" x2="698" y2="744.5" stroke="#d9d9d9" stroke-width="1"/>
<text x="111" y="749.5" font-size="14.8" fill="#595959" text-anchor="end">5</text>
<line x1="122.5" y1="716.5" x2="698" y2="716.5" stroke="#d9d9d9" stroke-width="1"/>
<text x="111" y="721.5" font-size="14.8" fill="#595959" text-anchor="end">6</text>
<line x1="122.5" y1="688.5" x2="698" y2="688.5" stroke="#d9d9d9" stroke-width="1"/>
<text x="111" y="693.5" font-size="14.8" fill="#595959" text-anchor="end">7</text>
<line x1="122.5" y1="661.5" x2="698" y2="661.5" stroke="#d9d9d9" stroke-width="1"/>
<text x="111" y="666.5" font-size="14.8" fill="#595959" text-anchor="end">8</text>
<line x1="122.5" y1="633.5" x2="698" y2="633.5" stroke="#d9d9d9" stroke-width="1"/>
<text x="111" y="638.5" font-size="14.8" fill="#595959" text-anchor="end">9</text>
<line x1="122.5" y1="605.5" x2="698" y2="605.5" stroke="#d9d9d9" stroke-width="1"/>
<text x="111" y="610.5" font-size="14.8" fill="#595959" text-anchor="end">10</text>
<rect x="122" y="633" width="288.5" height="251" fill="#8ed973"/>
<rect x="410.5" y="856" width="287" height="28" fill="#c00000"/>
<text x="266.5" y="911" font-size="15" fill="#595959" text-anchor="middle" textLength="115" lengthAdjust="spacingAndGlyphs">[0, 4.600.000.000]</text>
<text x="554.5" y="911" font-size="15" fill="#595959" text-anchor="middle" textLength="198" lengthAdjust="spacingAndGlyphs">(4.600.000.000, 9.200.000.000]</text>
<line x1="122.5" y1="605" x2="122.5" y2="884" stroke="#d9d9d9" stroke-width="1"/>
<rect x="122" y="633" width="288.5" height="251" fill="#8ed973"/>
<path d="M842.5 364.5 L849.5 364.5 L849.5 370.5 L856.5 370.5 L856.5 377.5 L849.5 377.5 L849.5 383.5 L842.5 383.5 L842.5 377.5 L836.5 377.5 L836.5 370.5 L842.5 370.5 Z" fill="#000000" transform="translate(1,1)"/>
<path d="M842.5 364.5 L849.5 364.5 L849.5 370.5 L856.5 370.5 L856.5 377.5 L849.5 377.5 L849.5 383.5 L842.5 383.5 L842.5 377.5 L836.5 377.5 L836.5 370.5 L842.5 370.5 Z" fill="#ffffff" stroke="#000000" stroke-width="1"/>
<rect x="1614" y="219" width="306" height="791" fill="#0a0a0a"/>
<rect x="1615.5" y="218.5" width="18" height="771" rx="9" fill="#161616"/>
<path d="M1620 231 L1629 231 L1624.5 224 Z" stroke="none" fill="#9a9a9a" stroke-width="1" stroke="#9a9a9a" stroke-width="0.8" stroke-linejoin="round"/>
<rect x="1620" y="236" width="9" height="589" rx="4.5" fill="#9e9e9e"/>
<path d="M1620 973 L1629 973 L1624.5 980 Z" stroke="none" fill="#9a9a9a" stroke-width="1" stroke="#9a9a9a" stroke-width="0.8" stroke-linejoin="round"/>
<line x1="1635.5" y1="221" x2="1635.5" y2="1008" stroke="#4a4a4a" stroke-width="1"/>
<text x="1650" y="253.4" font-size="20.8" fill="#ffffff" textLength="158.7" lengthAdjust="spacingAndGlyphs">Form formatieren</text>
<path d="M1848 239 L1855 246 L1862 239" stroke="#e0e0e0" fill="none" stroke-width="1.3"/>
<path d="M1891 237.5 L1901.5 248 M1901.5 237.5 L1891 248" stroke="#e0e0e0" fill="none" stroke-width="1.3"/>
<rect x="1652" y="266.5" width="31" height="31" rx="4" fill="#1b1b1b" stroke="#8a8a8a" stroke-width="1"/>
<path d="M1656.5 281.5 L1666.5 271.5 L1676.5 281.5 L1666.5 291.5 Z" stroke="#ffffff" fill="#1e7145" stroke-width="1.4" stroke-linejoin="round"/>
<ellipse cx="1665" cy="272" rx="2" ry="2.8" fill="none" stroke="#e0e0e0" stroke-width="1"/>
<line x1="1666.5" y1="272" x2="1666.5" y2="278" stroke="#ffffff" stroke-width="1.1"/>
<circle cx="1666.3" cy="278.5" r="1.3" fill="#ffffff"/>
<path d="M1672.5 276 Q1678 275 1678.5 280 Q1679 284 1676 290 Q1675.5 284 1673 281 Z" stroke="none" fill="#ffffff" stroke-width="1"/>
<path d="M1709.5 270.5 L1719.5 277.5 L1716 288.5 L1703 288.5 L1699.5 277.5 Z" stroke="#e8e8e8" fill="none" stroke-width="1.2" stroke-linejoin="round"/>
<path d="M1701.5 292.5 L1703 288.5 M1717.5 292.5 L1716 288.5" stroke="#e8e8e8" fill="none" stroke-width="1.2"/>
<path d="M1741 271.5 L1741 292.5 M1739 271.5 L1743 271.5 M1739 292.5 L1743 292.5" stroke="#e8e8e8" fill="none" stroke-width="1.1"/>
<path d="M1745.5 271.5 L1761.5 271.5 M1745.5 269.5 L1745.5 273.5 M1761.5 269.5 L1761.5 273.5" stroke="#e8e8e8" fill="none" stroke-width="1.1"/>
<rect x="1745.5" y="276.5" width="16" height="16" fill="none" stroke="#e8e8e8" stroke-width="1.1"/>
<path d="M1753.5 279 L1753.5 290 M1748 284.5 L1759 284.5 M1751.8 280.8 L1753.5 279 L1755.2 280.8 M1751.8 288.2 L1753.5 290 L1755.2 288.2 M1749.8 282.8 L1748 284.5 L1749.8 286.2 M1757.2 282.8 L1759 284.5 L1757.2 286.2" stroke="#e8e8e8" fill="none" stroke-width="0.9"/>
<path d="M1649 312.5 L1661 312.5 L1666.5 305.5 L1672 312.5 L1906 312.5" stroke="#5a5a5a" fill="none" stroke-width="1.1"/>
<path d="M1657.5 325.5 L1661.5 330 L1665.5 325.5" stroke="#ffffff" fill="none" stroke-width="1.5"/>
<text x="1672" y="333.3" font-size="13" fill="#ffffff" font-weight="bold" textLength="40" lengthAdjust="spacingAndGlyphs">Füllung</text>
<circle cx="1677.4" cy="358.5" r="5.5" fill="#101010" stroke="#4a4a4a" stroke-width="1.1"/>
<text x="1689.4" y="364.5" font-size="12.3" fill="#7a7a7a" textLength="71.6" lengthAdjust="spacingAndGlyphs">Keine Füllung</text>
<line x1="1689.5" y1="366.0" x2="1696.5" y2="366.0" stroke="#7a7a7a" stroke-width="1"/>
<circle cx="1677.4" cy="380.5" r="5.5" fill="#101010" stroke="#4a4a4a" stroke-width="1.1"/>
<text x="1689.4" y="386.5" font-size="12.3" fill="#7a7a7a" textLength="95.5" lengthAdjust="spacingAndGlyphs">Einfarbige Füllung</text>
<line x1="1746" y1="388.0" x2="1753" y2="388.0" stroke="#7a7a7a" stroke-width="1"/>
<circle cx="1677.4" cy="402.5" r="5.5" fill="#101010" stroke="#4a4a4a" stroke-width="1.1"/>
<text x="1689.4" y="408.5" font-size="12.3" fill="#7a7a7a" textLength="58.5" lengthAdjust="spacingAndGlyphs">Farbverlauf</text>
<line x1="1713.5" y1="410.0" x2="1720" y2="410.0" stroke="#7a7a7a" stroke-width="1"/>
<circle cx="1677.4" cy="424.5" r="5.5" fill="#101010" stroke="#4a4a4a" stroke-width="1.1"/>
<text x="1689.4" y="430.5" font-size="12.3" fill="#7a7a7a" textLength="125" lengthAdjust="spacingAndGlyphs">Bild- oder Texturfüllung</text>
<line x1="1689.5" y1="432.0" x2="1697" y2="432.0" stroke="#7a7a7a" stroke-width="1"/>
<circle cx="1677.4" cy="446.5" r="5.5" fill="#101010" stroke="#4a4a4a" stroke-width="1.1"/>
<text x="1689.4" y="452.5" font-size="12.3" fill="#7a7a7a" textLength="74.5" lengthAdjust="spacingAndGlyphs">Musterfüllung</text>
<line x1="1727" y1="454.0" x2="1734" y2="454.0" stroke="#7a7a7a" stroke-width="1"/>
<path d="M1660 477 L1664.5 481.5 L1660 486" stroke="#ffffff" fill="none" stroke-width="1.5"/>
<text x="1672" y="486.4" font-size="13" fill="#ffffff" font-weight="bold" textLength="26" lengthAdjust="spacingAndGlyphs">Linie</text>
<rect x="0" y="983" width="1614" height="27" fill="#0a0a0a"/>
<line x1="0" y1="982.5" x2="1614" y2="982.5" stroke="#5a5a5a" stroke-width="1"/>
<rect x="16" y="983" width="84" height="27" fill="#262626"/>
<path d="M33 991.5 L28.5 995.5 L33 999.5 Z" stroke="none" fill="#8a8a8a" stroke-width="1"/>
<path d="M56 991.5 L60.5 995.5 L56 999.5 Z" stroke="none" fill="#8a8a8a" stroke-width="1"/>
<rect x="100" y="982" width="76" height="23" fill="#ffffff"/>
<rect x="100" y="1005" width="76" height="2" fill="#1e7145"/>
<rect x="176" y="983" width="56" height="27" fill="#262626"/>
<text x="138" y="999.5" font-size="12.5" fill="#1e7145" text-anchor="middle" font-weight="bold" textLength="50.5" lengthAdjust="spacingAndGlyphs">Tabelle1</text>
<circle cx="216.9" cy="996" r="7.5" fill="none" stroke="#ffffff" stroke-width="1.2"/>
<path d="M216.9 992 L216.9 1000 M212.9 996 L220.9 996" stroke="#ffffff" fill="none" stroke-width="1.8"/>
<circle cx="982" cy="992.5" r="1.2" fill="#e0e0e0"/>
<circle cx="982" cy="996.8" r="1.2" fill="#e0e0e0"/>
<circle cx="982" cy="1001" r="1.2" fill="#e0e0e0"/>
<rect x="996" y="987" width="620" height="17" rx="8.5" fill="#161616"/>
<path d="M1007.8 991 L1007.8 1000 L1001 995.5 Z" stroke="none" fill="#9a9a9a" stroke-width="1" stroke="#9a9a9a" stroke-width="0.8" stroke-linejoin="round"/>
<rect x="1013" y="991" width="585" height="9" rx="4.5" fill="#9e9e9e"/>
<path d="M1604.8 991 L1604.8 1000 L1611.5 995.5 Z" stroke="none" fill="#9a9a9a" stroke-width="1" stroke="#9a9a9a" stroke-width="0.8" stroke-linejoin="round"/>
<rect x="0" y="1010" width="1920" height="22" fill="#161616"/>
<line x1="0" y1="1010.5" x2="1920" y2="1010.5" stroke="#333333" stroke-width="1"/>
<line x1="0" y1="1032.5" x2="1920" y2="1032.5" stroke="#3a3a3a" stroke-width="1"/>
<text x="11.5" y="1025.6" font-size="12" fill="#ffffff" textLength="28.3" lengthAdjust="spacingAndGlyphs">Bereit</text>
<circle cx="66" cy="1015.8" r="1.8" fill="none" stroke="#e0e0e0" stroke-width="1"/>
<path d="M60 1018.5 Q66 1020 72.5 1018.5 M66 1019.5 L65 1024 L62 1027.5 M66 1024 L67.5 1022" stroke="#e0e0e0" fill="none" stroke-width="1"/>
<path d="M68 1022.5 L74 1027.5 M74 1022.5 L68 1027.5" stroke="#e0e0e0" fill="none" stroke-width="1"/>
<text x="78.5" y="1025.6" font-size="12" fill="#ffffff" textLength="147" lengthAdjust="spacingAndGlyphs">Barrierefreiheit: Untersuchen</text>
<rect x="1617" y="1011" width="40" height="21" fill="#262626"/>
<rect x="1630.5" y="1014.5" width="13" height="12" fill="none" stroke="#ffffff" stroke-width="1"/>
<line x1="1634.8" y1="1014.5" x2="1634.8" y2="1026.5" stroke="#ffffff" stroke-width="1"/>
<line x1="1639.2" y1="1014.5" x2="1639.2" y2="1026.5" stroke="#ffffff" stroke-width="1"/>
<line x1="1630.5" y1="1018.5" x2="1643.5" y2="1018.5" stroke="#ffffff" stroke-width="1"/>
<line x1="1630.5" y1="1022.5" x2="1643.5" y2="1022.5" stroke="#ffffff" stroke-width="1"/>
<rect x="1670.5" y="1014.5" width="13" height="12.5" fill="none" stroke="#ffffff" stroke-width="1"/>
<rect x="1673" y="1017" width="8" height="7.5" fill="none" stroke="#ffffff" stroke-width="0.9"/>
<line x1="1674.5" y1="1019.5" x2="1679.5" y2="1019.5" stroke="#ffffff" stroke-width="0.8"/>
<line x1="1674.5" y1="1021.5" x2="1679.5" y2="1021.5" stroke="#ffffff" stroke-width="0.8"/>
<line x1="1674.5" y1="1023.5" x2="1679.5" y2="1023.5" stroke="#ffffff" stroke-width="0.8"/>
<rect x="1710.5" y="1014.5" width="13.5" height="12.5" fill="none" stroke="#ffffff" stroke-width="1"/>
<path d="M1713.5 1014.5 L1713.5 1021.5 L1717.5 1021.5 L1717.5 1014.5 M1710.5 1021.5 L1713.5 1021.5" stroke="#ffffff" fill="none" stroke-width="1"/>
<line x1="1743" y1="1020.5" x2="1751.5" y2="1020.5" stroke="#e0e0e0" stroke-width="1.1"/>
<line x1="1756" y1="1020.5" x2="1856.5" y2="1020.5" stroke="#9a9a9a" stroke-width="1"/>
<rect x="1808.5" y="1016" width="5.5" height="11.5" fill="#9e9e9e"/>
<line x1="1806.5" y1="1018" x2="1806.5" y2="1023" stroke="#9a9a9a" stroke-width="1"/>
<path d="M1861 1020.5 L1869.5 1020.5 M1865.2 1016.2 L1865.2 1024.8" stroke="#e0e0e0" fill="none" stroke-width="1.1"/>
<text x="1883" y="1025.2" font-size="11.5" fill="#ffffff" textLength="29" lengthAdjust="spacingAndGlyphs">130 %</text>
<rect x="0" y="1033" width="1920" height="47" fill="#1c1c1c"/>
<defs>
<linearGradient id="gwin" x1="0" y1="0" x2="1" y2="1"><stop offset="0" stop-color="#6fd6fb"/><stop offset="1" stop-color="#0a84d8"/></linearGradient>
<linearGradient id="gff" x1="0" y1="0" x2="0" y2="1"><stop offset="0" stop-color="#ffbd2e"/><stop offset="0.5" stop-color="#ff6a2a"/><stop offset="1" stop-color="#e31587"/></linearGradient>
<linearGradient id="gedge" x1="0" y1="0.2" x2="1" y2="0.6"><stop offset="0" stop-color="#38c4f6"/><stop offset="0.55" stop-color="#2ec6c6"/><stop offset="1" stop-color="#6ae85c"/></linearGradient>
<linearGradient id="gnpp" x1="0" y1="0" x2="0" y2="1"><stop offset="0" stop-color="#e8f0e0"/><stop offset="1" stop-color="#47b53a"/></linearGradient>
<linearGradient id="gbw" x1="0" y1="0" x2="1" y2="1"><stop offset="0" stop-color="#7b4cf0"/><stop offset="0.5" stop-color="#f07a24"/><stop offset="1" stop-color="#f8c21c"/></linearGradient>
<linearGradient id="gpaint" x1="0" y1="0" x2="1" y2="1"><stop offset="0" stop-color="#5ad2f5"/><stop offset="1" stop-color="#1d8ee0"/></linearGradient>
</defs>
<rect x="73.5" y="1072" width="7" height="3" rx="1.5" fill="#8c8c8c"/>
<rect x="117.5" y="1072" width="7" height="3" rx="1.5" fill="#8c8c8c"/>
<rect x="161.5" y="1072" width="7" height="3" rx="1.5" fill="#8c8c8c"/>
<rect x="205.5" y="1072" width="7" height="3" rx="1.5" fill="#8c8c8c"/>
<rect x="249.5" y="1072" width="7" height="3" rx="1.5" fill="#8c8c8c"/>
<rect x="293.5" y="1072" width="7" height="3" rx="1.5" fill="#8c8c8c"/>
<rect x="337.5" y="1072" width="7" height="3" rx="1.5" fill="#8c8c8c"/>
<rect x="381.5" y="1072" width="7" height="3" rx="1.5" fill="#8c8c8c"/>
<rect x="425.5" y="1072" width="7" height="3" rx="1.5" fill="#8c8c8c"/>
<rect x="469.5" y="1072" width="7" height="3" rx="1.5" fill="#8c8c8c"/>
<rect x="513.5" y="1072" width="7" height="3" rx="1.5" fill="#8c8c8c"/>
<rect x="557.5" y="1072" width="7" height="3" rx="1.5" fill="#8c8c8c"/>
<rect x="21" y="1045" width="11" height="11" rx="1" fill="url(#gwin)"/>
<rect x="33.2" y="1045" width="11" height="11" rx="1" fill="url(#gwin)"/>
<rect x="21" y="1057.2" width="11" height="11" rx="1" fill="url(#gwin)"/>
<rect x="33.2" y="1057.2" width="11" height="11" rx="1" fill="url(#gwin)"/>
<path d="M65 1047 Q65 1045 67 1045 L73.5 1045 L76 1047.5 L87 1047.5 Q89 1047.5 89 1049.5 L89 1066.5 L65 1066.5 Z" stroke="none" fill="#f6c445" stroke-width="1"/>
<rect x="65" y="1050" width="24" height="16.5" fill="#fbd35e"/>
<rect x="70.5" y="1059.5" width="13" height="7" rx="1.2" fill="#1b6fd0"/>
<rect x="72.5" y="1061.5" width="9" height="1.2" fill="#4aa0f0"/>
<circle cx="121" cy="1056.3" r="11.2" fill="url(#gff)"/>
<path d="M109.8 1053 L112.3 1046.5 L114 1050 L116.2 1047 L117.5 1050.5 L120.5 1048.5 Q119 1046 122.5 1043.8 Q125 1047.5 128.5 1048.5 Q131.5 1050 132 1054 L132.5 1046 L125 1043 L109 1043 Z" stroke="none" fill="#1c1c1c" stroke-width="1"/>
<circle cx="121.3" cy="1056.8" r="5.3" fill="#7a48e8"/>
<path d="M112.5 1052 Q116 1049.8 120.5 1051.5 Q123.5 1052.5 124 1051 Q123.5 1054 119.5 1053.8 Q116.5 1053.5 115.5 1056 Q113.5 1054.5 112.5 1052 Z" stroke="none" fill="#ff8a2a" stroke-width="1"/>
<circle cx="165" cy="1056" r="11.9" fill="url(#gedge)"/>
<path d="M153.1 1056 Q153.5 1050 160 1049.5 Q165.5 1049.3 167 1052.5 L163.5 1060 Q166 1064 176 1061.5 Q172 1068 165 1067.9 Q153.1 1067.5 153.1 1056 Z" stroke="none" fill="#0b80de" stroke-width="1"/>
<path d="M159.8 1057 Q159.8 1052 164.5 1052 Q162 1056 164 1060 Q167 1064 176 1061.5 Q172.5 1066.5 167 1066.5 Q159.8 1065 159.8 1057 Z" stroke="none" fill="#0b52a2" stroke-width="1"/>
<ellipse cx="166" cy="1056.3" rx="2.2" ry="3.1" fill="#1c1c1c"/>
<path d="M165.5 1059.3 Q169.5 1062 176.5 1060.5" stroke="#1c1c1c" fill="none" stroke-width="1.3"/>
<circle cx="209" cy="1057" r="11" fill="#1f6fd8"/>
<path d="M201 1048.5 Q204 1044 211 1044.5 Q217 1044.5 221 1048 Q218 1048.5 216.5 1050 Q212 1047.5 206 1050.5 Z" stroke="none" fill="#2a7ae0" stroke-width="1"/>
<path d="M198 1053 Q198.5 1047.5 201.5 1046 Q200.5 1050 201 1053 Z" stroke="none" fill="#2a7ae0" stroke-width="1"/>
<path d="M203.5 1055 Q209 1050.5 214.5 1055 L214.5 1059.5 Q209 1063 203.5 1059.5 Z" stroke="none" fill="#e8f2ff" stroke-width="1"/>
<path d="M203.8 1055.3 L209 1058.5 L214.2 1055.3" stroke="#a8c8f0" fill="none" stroke-width="0.8"/>
<rect x="242" y="1045" width="20" height="22.5" fill="url(#gnpp)"/>
<rect x="242" y="1045" width="20" height="22.5" fill="none" stroke="#c8c8c8" stroke-width="0.8"/>
<path d="M246 1052 L246 1058 M248.5 1052 L248.5 1058 M250 1055 L256 1055" stroke="#1a1a1a" fill="none" stroke-width="1"/>
<path d="M254 1063 L263.5 1045" stroke="#f0b020" fill="none" stroke-width="2"/>
<path d="M296.5 1044.5 L308.5 1056.5 L296.5 1068.5 L284.5 1056.5 Z" stroke="none" fill="#7ab51d" stroke-width="1"/>
<path d="M290 1066 L298 1069 L309 1058" stroke="#5a8a10" fill="none" stroke-width="1.5"/>
<text x="296.5" y="1061" font-size="13" fill="#ffffff" text-anchor="middle" font-weight="bold">?</text>
<circle cx="341" cy="1055.5" r="11.3" fill="url(#gbw)"/>
<path d="M336 1050 L346 1050 L346 1056 Q346 1061 341 1063 Q336 1061 336 1056 Z" stroke="none" fill="#ffffff" stroke-width="1"/>
<circle cx="341" cy="1055" r="1.6" fill="#2a3a6a"/>
<rect x="340.3" y="1055.5" width="1.4" height="3.5" fill="#2a3a6a"/>
<rect x="373.5" y="1046.5" width="22" height="18.5" fill="#000000" stroke="#9a9a9a" stroke-width="1"/>
<rect x="373.5" y="1046.5" width="22" height="2" fill="#9a9a9a"/>
<text x="375.5" y="1054.5" font-size="6" fill="#e0e0e0">C:\</text>
<line x1="386" y1="1054.5" x2="393" y2="1054.5" stroke="#e0e0e0" stroke-width="1"/>
<circle cx="429" cy="1055.5" r="11.3" fill="#7b3fc6"/>
<circle cx="429" cy="1055.5" r="7.8" fill="none" stroke="#e2d6f6" stroke-width="1.5"/>
<ellipse cx="429" cy="1054" rx="4.2" ry="3.6" fill="#e2d6f6"/>
<path d="M425.2 1052.5 L425.3 1048.8 L427.5 1050.6 Z M432.8 1052.5 L432.7 1048.8 L430.5 1050.6 Z" stroke="none" fill="#e2d6f6" stroke-width="1"/>
<rect x="427.3" y="1056.5" width="3.4" height="6.5" fill="#e2d6f6"/>
<path d="M427.3 1060.5 Q424.5 1060.8 423.8 1058.5" stroke="#e2d6f6" fill="none" stroke-width="1.1"/>
<rect x="461.5" y="1044.5" width="23" height="23" fill="#b50000"/>
<text x="473" y="1063.5" font-size="16" fill="#ffffff" text-anchor="middle" font-weight="bold" font-style="italic">Fz</text>
<path d="M506 1056 Q506 1045 517 1045 Q528 1045 528 1053 Q528 1058 522 1057 Q518 1057 519 1061 Q520 1066 515 1066 Q506 1066 506 1056 Z" stroke="none" fill="url(#gpaint)" stroke-width="1"/>
<circle cx="511" cy="1053" r="1.8" fill="#e84a2a"/><circle cx="514" cy="1048.5" r="1.8" fill="#4cc03a"/><circle cx="519.5" cy="1048" r="1.8" fill="#f0c020"/>
<path d="M526.5 1051 L524.5 1068" stroke="#a86a2a" fill="none" stroke-width="2"/>
<text x="556" y="1053" font-size="9" fill="#e8603a" font-weight="bold">D</text>
<text x="564" y="1050.5" font-size="9" fill="#3ab04a" font-weight="bold">X</text>
<text x="552" y="1063" font-size="9" fill="#3a80e0" font-weight="bold">B</text>
<text x="559" y="1060" font-size="9" fill="#c04ac0" font-weight="bold">O</text>
<text x="565" y="1066" font-size="9" fill="#f0d020" font-weight="bold">S</text>
<rect x="585.5" y="1036.5" width="39.5" height="39" rx="5" fill="#2c2c2c"/>
<rect x="599" y="1045" width="18.5" height="21.5" rx="1.5" fill="#21a366"/>
<rect x="599" y="1045" width="18.5" height="7" fill="#33c481"/>
<rect x="599" y="1059.5" width="18.5" height="7" fill="#185c37"/>
<rect x="593" y="1050" width="12.5" height="12.5" rx="1" fill="#107c41"/>
<text x="599.3" y="1060.5" font-size="10.5" fill="#ffffff" text-anchor="middle" font-weight="bold">X</text>
<rect x="597" y="1072" width="16" height="3" rx="1.5" fill="#f08a72"/>
<path d="M1733.5 1059.5 L1739 1054 L1744.5 1059.5" stroke="#ffffff" fill="none" stroke-width="1.3"/>
<rect x="1763.5" y="1049.5" width="13" height="10" fill="none" stroke="#ffffff" stroke-width="1.1"/>
<path d="M1770 1059.5 L1770 1063.5 M1766 1063.5 L1774 1063.5" stroke="#ffffff" fill="none" stroke-width="1.1"/>
<rect x="1775.5" y="1047.5" width="3.5" height="6" rx="1" fill="#1c1c1c" stroke="#ffffff" stroke-width="1"/>
<line x1="1777.2" y1="1053.5" x2="1777.2" y2="1063" stroke="#ffffff" stroke-width="1"/>
<path d="M1787.5 1053.5 L1790.5 1053.5 L1794 1050 L1794 1061 L1790.5 1057.5 L1787.5 1057.5 Z" stroke="#ffffff" fill="none" stroke-width="1.1" stroke-linejoin="round"/>
<path d="M1796.5 1053 Q1798 1055.5 1796.5 1058 M1799 1051.5 Q1801.5 1055.5 1799 1059.5 M1801.5 1050 Q1805 1055.5 1801.5 1061" stroke="#8a8a8a" fill="none" stroke-width="1"/>
<text x="1877" y="1052.3" font-size="12" fill="#ffffff" text-anchor="end" textLength="28.5" lengthAdjust="spacingAndGlyphs">22:01</text>
<text x="1877" y="1068" font-size="12" fill="#ffffff" text-anchor="end" textLength="57.5" lengthAdjust="spacingAndGlyphs">11.11.2025</text>
<path d="M1892.5 1048.5 Q1888 1049 1888 1054 L1888 1059 L1886 1061.5 L1899 1061.5 L1897 1059 L1897 1054 Q1897 1049 1892.5 1048.5 Z" stroke="none" fill="#f7a27a" stroke-width="1"/>
<ellipse cx="1892.5" cy="1063.3" rx="2.5" ry="1.5" fill="#f7a27a"/>
</svg></body></html>
